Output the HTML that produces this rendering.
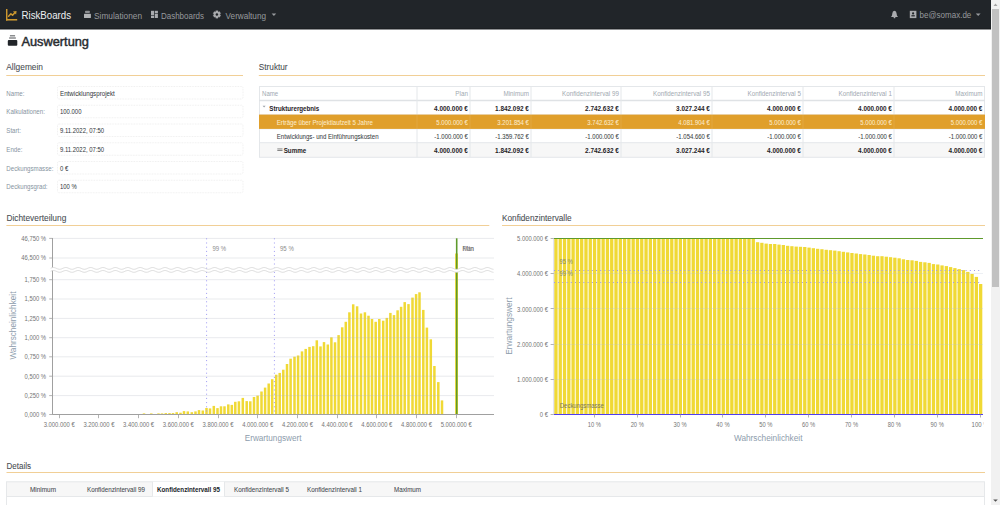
<!DOCTYPE html>
<html><head><meta charset="utf-8"><title>RiskBoards - Auswertung</title>
<style>html,body{margin:0;padding:0;background:#fff;overflow:hidden;width:1000px;height:505px}
svg{display:block;font-family:"Liberation Sans", sans-serif}</style></head>
<body><svg width="1000" height="505" viewBox="0 0 1000 505">
<defs><clipPath id="cc"><rect x="500" y="200" width="483.5" height="260"/></clipPath></defs>
<rect x="0" y="0" width="991" height="29.5" fill="#212529"/>
<rect x="0" y="28" width="991" height="1" fill="#1c1f22"/>
<rect x="6" y="9" width="1.45" height="11.6" fill="#cc982f"/>
<rect x="6" y="19.0" width="11.2" height="1.55" fill="#cc982f"/>
<path d="M8.6 16.2 L10.9 13.8 L12.6 15.2 L15.0 12.6" fill="none" stroke="#cc982f" stroke-width="1.5" stroke-linejoin="round" stroke-linecap="round"/>
<path d="M12.9 11.4 L16.6 10.9 L16.1 14.6 Z" fill="#cc982f"/>
<text x="21.5" y="18.9" font-size="10.8" fill="#eef0f2" textLength="49.5" lengthAdjust="spacingAndGlyphs">RiskBoards</text>
<rect x="85" y="10.8" width="4.9" height="2.3" fill="#8c8e91" rx="0.8"/>
<rect x="84" y="13.8" width="6.9" height="4.2" fill="#b3b5b7" rx="0.5"/>
<text x="94" y="18.5" font-size="9.3" fill="#979a9d" textLength="48" lengthAdjust="spacingAndGlyphs">Simulationen</text>
<rect x="151" y="10.8" width="3.1" height="4.6" fill="#a9abae"/>
<rect x="151" y="16" width="3.1" height="2" fill="#a9abae"/>
<rect x="154.8" y="10.8" width="3.1" height="2.2" fill="#a9abae"/>
<rect x="154.8" y="13.6" width="3.1" height="4.4" fill="#a9abae"/>
<text x="161" y="18.5" font-size="9.3" fill="#979a9d" textLength="43" lengthAdjust="spacingAndGlyphs">Dashboards</text>
<polygon points="220.70,15.28 219.56,17.25 218.71,16.80 218.07,17.16 218.04,18.13 215.76,18.13 215.73,17.16 215.09,16.80 214.24,17.25 213.10,15.28 213.92,14.77 213.92,14.03 213.10,13.52 214.24,11.55 215.09,12.00 215.73,11.64 215.76,10.67 218.04,10.67 218.07,11.64 218.71,12.00 219.56,11.55 220.70,13.52 219.88,14.03 219.88,14.77" fill="#a9abae" stroke="#a9abae" stroke-width="0.3" stroke-linejoin="round"/>
<circle cx="216.9" cy="14.4" r="1.25" fill="#212529"/>
<text x="225.6" y="18.5" font-size="9.3" fill="#979a9d" textLength="40.4" lengthAdjust="spacingAndGlyphs">Verwaltung</text>
<path d="M271.6 13.6 H276.2 L273.9 16 Z" fill="#979a9d"/>
<path d="M891 17 Q892.3 15.6 892.3 13.5 Q892.5 10.9 894.4 10.8 Q896.5 10.9 896.6 13.5 Q896.6 15.6 898 17 Z" fill="#a9abae"/>
<circle cx="894.5" cy="17.4" r="0.9" fill="#a9abae"/>
<rect x="909.8" y="10.8" width="6.6" height="7.3" fill="#a9abae"/>
<circle cx="913.1" cy="13.4" r="1.1" fill="#212529"/>
<rect x="911.4" y="15.2" width="3.4" height="1.2" fill="#212529"/>
<text x="919.6" y="18.3" font-size="9.3" fill="#979a9d" textLength="51.7" lengthAdjust="spacingAndGlyphs">be@somax.de</text>
<path d="M975.8 13.6 H980.6 L978.2 16 Z" fill="#979a9d"/>
<rect x="991" y="0" width="9" height="505" fill="#f1f1f1"/>
<rect x="992" y="9" width="7" height="278" fill="#c1c1c1"/>
<path d="M993.5 5.9 H997.5 L995.5 3.6 Z" fill="#a3a3a3"/>
<path d="M993.2 499.4 H997.8 L995.5 501.8 Z" fill="#505050"/>
<rect x="9.9" y="35" width="5.2" height="1.5" fill="#8a8c8e" rx="0.3"/>
<rect x="9.1" y="37.3" width="6.8" height="1.4" fill="#8a8c8e" rx="0.3"/>
<rect x="7.8" y="39.9" width="9.5" height="5.9" fill="#212529" rx="1"/>
<text x="21.4" y="46" font-size="12.5" fill="#282c30" textLength="67.6" lengthAdjust="spacingAndGlyphs" stroke="#282c30" stroke-width="0.45">Auswertung</text>
<text x="6.3" y="70" font-size="8.9" fill="#4a4e53" textLength="36.7" lengthAdjust="spacingAndGlyphs" stroke="#4a4e53" stroke-width="0.08">Allgemein</text>
<rect x="6.3" y="75" width="236.7" height="1" fill="#f1cf96"/>
<text x="258.8" y="70" font-size="8.9" fill="#4a4e53" textLength="28.8" lengthAdjust="spacingAndGlyphs" stroke="#4a4e53" stroke-width="0.08">Struktur</text>
<rect x="258.8" y="75" width="726.2" height="1" fill="#f1cf96"/>
<text x="6.4" y="221.4" font-size="8.9" fill="#4a4e53" textLength="59.9" lengthAdjust="spacingAndGlyphs" stroke="#4a4e53" stroke-width="0.08">Dichteverteilung</text>
<rect x="6.4" y="225" width="482.90000000000003" height="1" fill="#f1cf96"/>
<text x="502" y="221.4" font-size="8.9" fill="#4a4e53" textLength="69.6" lengthAdjust="spacingAndGlyphs" stroke="#4a4e53" stroke-width="0.08">Konfidenzintervalle</text>
<rect x="502" y="225" width="483" height="1" fill="#f1cf96"/>
<text x="6.5" y="468.5" font-size="8.9" fill="#4a4e53" textLength="24.5" lengthAdjust="spacingAndGlyphs" stroke="#4a4e53" stroke-width="0.08">Details</text>
<rect x="6.5" y="472" width="978.5" height="1" fill="#f1cf96"/>
<rect x="57.5" y="86.50" width="185.5" height="12.5" rx="1.5" fill="none" stroke="#e2e2e2" stroke-width="0.6" stroke-dasharray="0.8,0.8"/>
<text x="6.3" y="95.5" font-size="6.6" fill="#8694a1" textLength="18.08" lengthAdjust="spacingAndGlyphs">Name:</text>
<text x="60" y="95.5" font-size="6.6" fill="#2f353a" textLength="54.82" lengthAdjust="spacingAndGlyphs">Entwicklungsprojekt</text>
<rect x="57.5" y="105.25" width="185.5" height="12.5" rx="1.5" fill="none" stroke="#e2e2e2" stroke-width="0.6" stroke-dasharray="0.8,0.8"/>
<text x="6.3" y="114.25" font-size="6.6" fill="#8694a1" textLength="38.56" lengthAdjust="spacingAndGlyphs">Kalkulationen:</text>
<text x="60" y="114.25" font-size="6.6" fill="#2f353a" textLength="21.47" lengthAdjust="spacingAndGlyphs">100.000</text>
<rect x="57.5" y="124.00" width="185.5" height="12.5" rx="1.5" fill="none" stroke="#e2e2e2" stroke-width="0.6" stroke-dasharray="0.8,0.8"/>
<text x="6.3" y="133.0" font-size="6.6" fill="#8694a1" textLength="14.67" lengthAdjust="spacingAndGlyphs">Start:</text>
<text x="60" y="133.0" font-size="6.6" fill="#2f353a" textLength="44.15" lengthAdjust="spacingAndGlyphs">9.11.2022, 07:50</text>
<rect x="57.5" y="142.75" width="185.5" height="12.5" rx="1.5" fill="none" stroke="#e2e2e2" stroke-width="0.6" stroke-dasharray="0.8,0.8"/>
<text x="6.3" y="151.75" font-size="6.6" fill="#8694a1" textLength="16.04" lengthAdjust="spacingAndGlyphs">Ende:</text>
<text x="60" y="151.75" font-size="6.6" fill="#2f353a" textLength="44.15" lengthAdjust="spacingAndGlyphs">9.11.2022, 07:50</text>
<rect x="57.5" y="161.50" width="185.5" height="12.5" rx="1.5" fill="none" stroke="#e2e2e2" stroke-width="0.6" stroke-dasharray="0.8,0.8"/>
<text x="6.3" y="170.5" font-size="6.6" fill="#8694a1" textLength="47.08" lengthAdjust="spacingAndGlyphs">Deckungsmasse:</text>
<text x="60" y="170.5" font-size="6.6" fill="#2f353a" textLength="8.26" lengthAdjust="spacingAndGlyphs">0 €</text>
<rect x="57.5" y="180.25" width="185.5" height="12.5" rx="1.5" fill="none" stroke="#e2e2e2" stroke-width="0.6" stroke-dasharray="0.8,0.8"/>
<text x="6.3" y="189.25" font-size="6.6" fill="#8694a1" textLength="41.28" lengthAdjust="spacingAndGlyphs">Deckungsgrad:</text>
<text x="60" y="189.25" font-size="6.6" fill="#2f353a" textLength="16.84" lengthAdjust="spacingAndGlyphs">100 %</text>
<rect x="259" y="142.7" width="725.5" height="14.6" fill="#f7f7f7"/>
<rect x="259.5" y="86.5" width="725" height="70.8" fill="none" stroke="#e4e7ea" stroke-width="1"/>
<line x1="259" y1="100.5" x2="985" y2="100.5" stroke="#e4e7ea" stroke-width="1"/>
<line x1="259" y1="114.9" x2="985" y2="114.9" stroke="#e4e7ea" stroke-width="1"/>
<line x1="259" y1="128.8" x2="985" y2="128.8" stroke="#e4e7ea" stroke-width="1"/>
<line x1="259" y1="142.7" x2="985" y2="142.7" stroke="#e4e7ea" stroke-width="1"/>
<line x1="259" y1="100.5" x2="985" y2="100.5" stroke="#dfe2e5" stroke-width="1.6"/>
<line x1="417" y1="86.5" x2="417" y2="157.3" stroke="#e4e7ea" stroke-width="1"/>
<line x1="470" y1="86.5" x2="470" y2="157.3" stroke="#e4e7ea" stroke-width="1"/>
<line x1="531" y1="86.5" x2="531" y2="157.3" stroke="#e4e7ea" stroke-width="1"/>
<line x1="621" y1="86.5" x2="621" y2="157.3" stroke="#e4e7ea" stroke-width="1"/>
<line x1="712" y1="86.5" x2="712" y2="157.3" stroke="#e4e7ea" stroke-width="1"/>
<line x1="803" y1="86.5" x2="803" y2="157.3" stroke="#e4e7ea" stroke-width="1"/>
<line x1="894" y1="86.5" x2="894" y2="157.3" stroke="#e4e7ea" stroke-width="1"/>
<rect x="259" y="114.6" width="726" height="14.3" fill="#e09f2b"/>
<line x1="417" y1="114.6" x2="417" y2="128.9" stroke="rgba(255,255,255,0.10)" stroke-width="1"/>
<line x1="470" y1="114.6" x2="470" y2="128.9" stroke="rgba(255,255,255,0.10)" stroke-width="1"/>
<line x1="531" y1="114.6" x2="531" y2="128.9" stroke="rgba(255,255,255,0.10)" stroke-width="1"/>
<line x1="621" y1="114.6" x2="621" y2="128.9" stroke="rgba(255,255,255,0.10)" stroke-width="1"/>
<line x1="712" y1="114.6" x2="712" y2="128.9" stroke="rgba(255,255,255,0.10)" stroke-width="1"/>
<line x1="803" y1="114.6" x2="803" y2="128.9" stroke="rgba(255,255,255,0.10)" stroke-width="1"/>
<line x1="894" y1="114.6" x2="894" y2="128.9" stroke="rgba(255,255,255,0.10)" stroke-width="1"/>
<text x="262" y="96.1" font-size="6.6" fill="#a1a9b1" textLength="16.2" lengthAdjust="spacingAndGlyphs">Name</text>
<text x="467.9" y="96.1" font-size="6.6" fill="#a1a9b1" text-anchor="end" textLength="12.55" lengthAdjust="spacingAndGlyphs">Plan</text>
<text x="528.9" y="96.1" font-size="6.6" fill="#a1a9b1" text-anchor="end" textLength="25.43" lengthAdjust="spacingAndGlyphs">Minimum</text>
<text x="618.9" y="96.1" font-size="6.6" fill="#a1a9b1" text-anchor="end" textLength="56.81" lengthAdjust="spacingAndGlyphs">Konfidenzinterval 99</text>
<text x="709.9" y="96.1" font-size="6.6" fill="#a1a9b1" text-anchor="end" textLength="56.81" lengthAdjust="spacingAndGlyphs">Konfidenzinterval 95</text>
<text x="800.9" y="96.1" font-size="6.6" fill="#a1a9b1" text-anchor="end" textLength="53.33" lengthAdjust="spacingAndGlyphs">Konfidenzinterval 5</text>
<text x="891.9" y="96.1" font-size="6.6" fill="#a1a9b1" text-anchor="end" textLength="53.33" lengthAdjust="spacingAndGlyphs">Konfidenzinterval 1</text>
<text x="982.4" y="96.1" font-size="6.6" fill="#a1a9b1" text-anchor="end" textLength="27.17" lengthAdjust="spacingAndGlyphs">Maximum</text>
<path d="M262.6 105.8 H265.6 L264.1 107.4 Z" fill="#9aa0a6"/>
<text x="269.3" y="110.5" font-size="6.5" fill="#1f2326" font-weight="bold" textLength="50" lengthAdjust="spacingAndGlyphs">Strukturergebnis</text>
<text x="467.9" y="110.5" font-size="6.5" fill="#1f2326" font-weight="bold" text-anchor="end" textLength="33.82" lengthAdjust="spacingAndGlyphs">4.000.000 €</text>
<text x="528.9" y="110.5" font-size="6.5" fill="#1f2326" font-weight="bold" text-anchor="end" textLength="33.82" lengthAdjust="spacingAndGlyphs">1.842.092 €</text>
<text x="618.9" y="110.5" font-size="6.5" fill="#1f2326" font-weight="bold" text-anchor="end" textLength="33.82" lengthAdjust="spacingAndGlyphs">2.742.632 €</text>
<text x="709.9" y="110.5" font-size="6.5" fill="#1f2326" font-weight="bold" text-anchor="end" textLength="33.82" lengthAdjust="spacingAndGlyphs">3.027.244 €</text>
<text x="800.9" y="110.5" font-size="6.5" fill="#1f2326" font-weight="bold" text-anchor="end" textLength="33.82" lengthAdjust="spacingAndGlyphs">4.000.000 €</text>
<text x="891.9" y="110.5" font-size="6.5" fill="#1f2326" font-weight="bold" text-anchor="end" textLength="33.82" lengthAdjust="spacingAndGlyphs">4.000.000 €</text>
<text x="982.4" y="110.5" font-size="6.5" fill="#1f2326" font-weight="bold" text-anchor="end" textLength="33.82" lengthAdjust="spacingAndGlyphs">4.000.000 €</text>
<text x="276.8" y="124.5" font-size="6.6" fill="#fcebcc" textLength="96.03" lengthAdjust="spacingAndGlyphs" stroke="#fcebcc" stroke-width="0.05">Erträge über Projektlaufzeit 5 Jahre</text>
<text x="467.9" y="124.5" font-size="6.6" fill="#fcebcc" text-anchor="end" textLength="31.55" lengthAdjust="spacingAndGlyphs" stroke="#fcebcc" stroke-width="0.05">5.000.000 €</text>
<text x="528.9" y="124.5" font-size="6.6" fill="#fcebcc" text-anchor="end" textLength="31.55" lengthAdjust="spacingAndGlyphs" stroke="#fcebcc" stroke-width="0.05">3.201.854 €</text>
<text x="618.9" y="124.5" font-size="6.6" fill="#fcebcc" text-anchor="end" textLength="31.55" lengthAdjust="spacingAndGlyphs" stroke="#fcebcc" stroke-width="0.05">3.742.632 €</text>
<text x="709.9" y="124.5" font-size="6.6" fill="#fcebcc" text-anchor="end" textLength="31.55" lengthAdjust="spacingAndGlyphs" stroke="#fcebcc" stroke-width="0.05">4.081.904 €</text>
<text x="800.9" y="124.5" font-size="6.6" fill="#fcebcc" text-anchor="end" textLength="31.55" lengthAdjust="spacingAndGlyphs" stroke="#fcebcc" stroke-width="0.05">5.000.000 €</text>
<text x="891.9" y="124.5" font-size="6.6" fill="#fcebcc" text-anchor="end" textLength="31.55" lengthAdjust="spacingAndGlyphs" stroke="#fcebcc" stroke-width="0.05">5.000.000 €</text>
<text x="982.4" y="124.5" font-size="6.6" fill="#fcebcc" text-anchor="end" textLength="31.55" lengthAdjust="spacingAndGlyphs" stroke="#fcebcc" stroke-width="0.05">5.000.000 €</text>
<text x="276.8" y="138.5" font-size="6.6" fill="#3a3f44" textLength="101.8" lengthAdjust="spacingAndGlyphs" stroke="#3a3f44" stroke-width="0.05">Entwicklungs- und Einführungskosten</text>
<text x="467.9" y="138.5" font-size="6.6" fill="#3a3f44" text-anchor="end" textLength="33.54" lengthAdjust="spacingAndGlyphs" stroke="#3a3f44" stroke-width="0.05">-1.000.000 €</text>
<text x="528.9" y="138.5" font-size="6.6" fill="#3a3f44" text-anchor="end" textLength="33.54" lengthAdjust="spacingAndGlyphs" stroke="#3a3f44" stroke-width="0.05">-1.359.762 €</text>
<text x="618.9" y="138.5" font-size="6.6" fill="#3a3f44" text-anchor="end" textLength="33.54" lengthAdjust="spacingAndGlyphs" stroke="#3a3f44" stroke-width="0.05">-1.000.000 €</text>
<text x="709.9" y="138.5" font-size="6.6" fill="#3a3f44" text-anchor="end" textLength="33.54" lengthAdjust="spacingAndGlyphs" stroke="#3a3f44" stroke-width="0.05">-1.054.660 €</text>
<text x="800.9" y="138.5" font-size="6.6" fill="#3a3f44" text-anchor="end" textLength="33.54" lengthAdjust="spacingAndGlyphs" stroke="#3a3f44" stroke-width="0.05">-1.000.000 €</text>
<text x="891.9" y="138.5" font-size="6.6" fill="#3a3f44" text-anchor="end" textLength="33.54" lengthAdjust="spacingAndGlyphs" stroke="#3a3f44" stroke-width="0.05">-1.000.000 €</text>
<text x="982.4" y="138.5" font-size="6.6" fill="#3a3f44" text-anchor="end" textLength="33.54" lengthAdjust="spacingAndGlyphs" stroke="#3a3f44" stroke-width="0.05">-1.000.000 €</text>
<rect x="277.3" y="148.6" width="5.2" height="0.7" fill="#555"/>
<rect x="277.3" y="150.3" width="5.2" height="0.7" fill="#555"/>
<text x="283.7" y="152.6" font-size="6.5" fill="#1f2326" font-weight="bold" textLength="22.54" lengthAdjust="spacingAndGlyphs">Summe</text>
<text x="467.9" y="152.6" font-size="6.5" fill="#1f2326" font-weight="bold" text-anchor="end" textLength="33.82" lengthAdjust="spacingAndGlyphs">4.000.000 €</text>
<text x="528.9" y="152.6" font-size="6.5" fill="#1f2326" font-weight="bold" text-anchor="end" textLength="33.82" lengthAdjust="spacingAndGlyphs">1.842.092 €</text>
<text x="618.9" y="152.6" font-size="6.5" fill="#1f2326" font-weight="bold" text-anchor="end" textLength="33.82" lengthAdjust="spacingAndGlyphs">2.742.632 €</text>
<text x="709.9" y="152.6" font-size="6.5" fill="#1f2326" font-weight="bold" text-anchor="end" textLength="33.82" lengthAdjust="spacingAndGlyphs">3.027.244 €</text>
<text x="800.9" y="152.6" font-size="6.5" fill="#1f2326" font-weight="bold" text-anchor="end" textLength="33.82" lengthAdjust="spacingAndGlyphs">4.000.000 €</text>
<text x="891.9" y="152.6" font-size="6.5" fill="#1f2326" font-weight="bold" text-anchor="end" textLength="33.82" lengthAdjust="spacingAndGlyphs">4.000.000 €</text>
<text x="982.4" y="152.6" font-size="6.5" fill="#1f2326" font-weight="bold" text-anchor="end" textLength="33.82" lengthAdjust="spacingAndGlyphs">4.000.000 €</text>
<text x="46" y="416.9" font-size="6.8" fill="#757575" text-anchor="end" textLength="21.46" lengthAdjust="spacingAndGlyphs">0,000 %</text>
<line x1="49.2" y1="414.5" x2="52.5" y2="414.5" stroke="#a0a0a0" stroke-width="0.8"/>
<text x="46" y="398.0" font-size="6.8" fill="#757575" text-anchor="end" textLength="21.46" lengthAdjust="spacingAndGlyphs">0,250 %</text>
<line x1="49.2" y1="395.6" x2="52.5" y2="395.6" stroke="#a0a0a0" stroke-width="0.8"/>
<text x="46" y="378.6" font-size="6.8" fill="#757575" text-anchor="end" textLength="21.46" lengthAdjust="spacingAndGlyphs">0,500 %</text>
<line x1="49.2" y1="376.2" x2="52.5" y2="376.2" stroke="#a0a0a0" stroke-width="0.8"/>
<text x="46" y="359.2" font-size="6.8" fill="#757575" text-anchor="end" textLength="21.46" lengthAdjust="spacingAndGlyphs">0,750 %</text>
<line x1="49.2" y1="356.8" x2="52.5" y2="356.8" stroke="#a0a0a0" stroke-width="0.8"/>
<text x="46" y="340.1" font-size="6.8" fill="#757575" text-anchor="end" textLength="21.46" lengthAdjust="spacingAndGlyphs">1,000 %</text>
<line x1="49.2" y1="337.7" x2="52.5" y2="337.7" stroke="#a0a0a0" stroke-width="0.8"/>
<text x="46" y="320.8" font-size="6.8" fill="#757575" text-anchor="end" textLength="21.46" lengthAdjust="spacingAndGlyphs">1,250 %</text>
<line x1="49.2" y1="318.4" x2="52.5" y2="318.4" stroke="#a0a0a0" stroke-width="0.8"/>
<text x="46" y="301.4" font-size="6.8" fill="#757575" text-anchor="end" textLength="21.46" lengthAdjust="spacingAndGlyphs">1,500 %</text>
<line x1="49.2" y1="299.0" x2="52.5" y2="299.0" stroke="#a0a0a0" stroke-width="0.8"/>
<text x="46" y="282.1" font-size="6.8" fill="#757575" text-anchor="end" textLength="21.46" lengthAdjust="spacingAndGlyphs">1,750 %</text>
<line x1="49.2" y1="279.7" x2="52.5" y2="279.7" stroke="#a0a0a0" stroke-width="0.8"/>
<text x="46" y="240.8" font-size="6.8" fill="#757575" text-anchor="end" textLength="24.71" lengthAdjust="spacingAndGlyphs">46,750 %</text>
<line x1="49.2" y1="238.4" x2="52.5" y2="238.4" stroke="#a0a0a0" stroke-width="0.8"/>
<text x="46" y="260.4" font-size="6.8" fill="#757575" text-anchor="end" textLength="24.71" lengthAdjust="spacingAndGlyphs">46,500 %</text>
<line x1="49.2" y1="258" x2="52.5" y2="258" stroke="#a0a0a0" stroke-width="0.8"/>
<rect x="142.75" y="413.4" width="2.5" height="0.9" fill="#f0d935"/>
<rect x="150.05" y="413.4" width="2.5" height="0.9" fill="#f0d935"/>
<rect x="157.25" y="413.4" width="2.5" height="0.9" fill="#f0d935"/>
<rect x="160.75" y="413.4" width="2.5" height="0.9" fill="#f0d935"/>
<rect x="164.55" y="413.1" width="2.5" height="1.2" fill="#f0d935"/>
<rect x="168.25" y="413.1" width="2.5" height="1.2" fill="#f0d935"/>
<rect x="171.75" y="413.1" width="2.5" height="1.2" fill="#f0d935"/>
<rect x="175.45" y="412.2" width="2.5" height="2.1" fill="#f0d935"/>
<rect x="179.25" y="412.7" width="2.5" height="1.6" fill="#f0d935"/>
<rect x="182.75" y="411.1" width="2.5" height="3.2" fill="#f0d935"/>
<rect x="186.55" y="411.4" width="2.5" height="2.9" fill="#f0d935"/>
<rect x="190.55" y="412.2" width="2.5" height="2.1" fill="#f0d935"/>
<rect x="194.25" y="411.4" width="2.5" height="2.9" fill="#f0d935"/>
<rect x="197.75" y="410.1" width="2.5" height="4.2" fill="#f0d935"/>
<rect x="201.55" y="410.5" width="2.5" height="3.8" fill="#f0d935"/>
<rect x="205.25" y="408.0" width="2.5" height="6.3" fill="#f0d935"/>
<rect x="208.75" y="408.4" width="2.5" height="5.9" fill="#f0d935"/>
<rect x="212.55" y="405.9" width="2.5" height="8.4" fill="#f0d935"/>
<rect x="216.25" y="408.1" width="2.5" height="6.2" fill="#f0d935"/>
<rect x="219.75" y="406.3" width="2.5" height="8" fill="#f0d935"/>
<rect x="223.25" y="406.3" width="2.5" height="8.0" fill="#f0d935"/>
<rect x="227.05" y="404.4" width="2.5" height="9.9" fill="#f0d935"/>
<rect x="230.55" y="404.9" width="2.5" height="9.4" fill="#f0d935"/>
<rect x="234.05" y="401.8" width="2.5" height="12.5" fill="#f0d935"/>
<rect x="237.65" y="401.3" width="2.5" height="13" fill="#f0d935"/>
<rect x="241.55" y="397.9" width="2.5" height="16.4" fill="#f0d935"/>
<rect x="245.45" y="401.1" width="2.5" height="13.2" fill="#f0d935"/>
<rect x="249.05" y="401.3" width="2.5" height="13" fill="#f0d935"/>
<rect x="252.75" y="397.0" width="2.5" height="17.3" fill="#f0d935"/>
<rect x="256.35" y="395.6" width="2.5" height="18.7" fill="#f0d935"/>
<rect x="260.25" y="391.5" width="2.5" height="22.8" fill="#f0d935"/>
<rect x="263.85" y="387.6" width="2.5" height="26.7" fill="#f0d935"/>
<rect x="267.45" y="383.5" width="2.5" height="30.8" fill="#f0d935"/>
<rect x="270.95" y="379.2" width="2.5" height="35.1" fill="#f0d935"/>
<rect x="274.95" y="374.7" width="2.5" height="39.6" fill="#f0d935"/>
<rect x="278.45" y="372.9" width="2.5" height="41.4" fill="#f0d935"/>
<rect x="282.05" y="369.7" width="2.5" height="44.6" fill="#f0d935"/>
<rect x="285.75" y="364.0" width="2.5" height="50.3" fill="#f0d935"/>
<rect x="289.35" y="358.7" width="2.5" height="55.6" fill="#f0d935"/>
<rect x="293.25" y="356.7" width="2.5" height="57.6" fill="#f0d935"/>
<rect x="296.85" y="355.5" width="2.5" height="58.8" fill="#f0d935"/>
<rect x="300.75" y="351.4" width="2.5" height="62.9" fill="#f0d935"/>
<rect x="304.45" y="348.9" width="2.5" height="65.4" fill="#f0d935"/>
<rect x="308.25" y="346.9" width="2.5" height="67.4" fill="#f0d935"/>
<rect x="311.95" y="346.2" width="2.5" height="68.1" fill="#f0d935"/>
<rect x="315.55" y="340.3" width="2.5" height="74" fill="#f0d935"/>
<rect x="319.25" y="346.4" width="2.5" height="67.9" fill="#f0d935"/>
<rect x="322.75" y="342.1" width="2.5" height="72.2" fill="#f0d935"/>
<rect x="326.55" y="344.5" width="2.5" height="69.8" fill="#f0d935"/>
<rect x="330.15" y="337.3" width="2.5" height="77" fill="#f0d935"/>
<rect x="333.75" y="342.3" width="2.5" height="72" fill="#f0d935"/>
<rect x="337.35" y="335.1" width="2.5" height="79.2" fill="#f0d935"/>
<rect x="340.95" y="327.3" width="2.5" height="87" fill="#f0d935"/>
<rect x="344.55" y="321.8" width="2.5" height="92.5" fill="#f0d935"/>
<rect x="348.15" y="312.3" width="2.5" height="102" fill="#f0d935"/>
<rect x="351.95" y="304.3" width="2.5" height="110" fill="#f0d935"/>
<rect x="355.85" y="306.3" width="2.5" height="108" fill="#f0d935"/>
<rect x="359.75" y="313.5" width="2.5" height="100.8" fill="#f0d935"/>
<rect x="363.65" y="312.3" width="2.5" height="102" fill="#f0d935"/>
<rect x="367.25" y="315.7" width="2.5" height="98.6" fill="#f0d935"/>
<rect x="370.75" y="319.0" width="2.5" height="95.3" fill="#f0d935"/>
<rect x="374.45" y="321.8" width="2.5" height="92.5" fill="#f0d935"/>
<rect x="378.05" y="319.0" width="2.5" height="95.3" fill="#f0d935"/>
<rect x="381.95" y="320.7" width="2.5" height="93.6" fill="#f0d935"/>
<rect x="385.55" y="317.9" width="2.5" height="96.4" fill="#f0d935"/>
<rect x="389.15" y="312.9" width="2.5" height="101.4" fill="#f0d935"/>
<rect x="392.75" y="315.1" width="2.5" height="99.2" fill="#f0d935"/>
<rect x="396.35" y="310.3" width="2.5" height="104" fill="#f0d935"/>
<rect x="399.85" y="306.8" width="2.5" height="107.5" fill="#f0d935"/>
<rect x="403.45" y="302.1" width="2.5" height="112.2" fill="#f0d935"/>
<rect x="407.25" y="304.1" width="2.5" height="110.2" fill="#f0d935"/>
<rect x="411.25" y="297.6" width="2.5" height="116.7" fill="#f0d935"/>
<rect x="414.85" y="294.1" width="2.5" height="120.2" fill="#f0d935"/>
<rect x="418.25" y="292.3" width="2.5" height="122" fill="#f0d935"/>
<rect x="422.05" y="309.9" width="2.5" height="104.4" fill="#f0d935"/>
<rect x="425.65" y="327.6" width="2.5" height="86.7" fill="#f0d935"/>
<rect x="429.55" y="339.3" width="2.5" height="75" fill="#f0d935"/>
<rect x="433.15" y="366.0" width="2.5" height="48.3" fill="#f0d935"/>
<rect x="437.05" y="382.1" width="2.5" height="32.2" fill="#f0d935"/>
<rect x="440.75" y="400.4" width="2.5" height="13.9" fill="#f0d935"/>
<rect x="455.1" y="253.5" width="2.9" height="160.8" fill="#f0d935"/>
<line x1="52.5" y1="395.6" x2="494" y2="395.6" stroke="rgba(175,180,192,0.28)" stroke-width="1"/>
<line x1="52.5" y1="376.2" x2="494" y2="376.2" stroke="rgba(175,180,192,0.28)" stroke-width="1"/>
<line x1="52.5" y1="356.8" x2="494" y2="356.8" stroke="rgba(175,180,192,0.28)" stroke-width="1"/>
<line x1="52.5" y1="337.7" x2="494" y2="337.7" stroke="rgba(175,180,192,0.28)" stroke-width="1"/>
<line x1="52.5" y1="318.4" x2="494" y2="318.4" stroke="rgba(175,180,192,0.28)" stroke-width="1"/>
<line x1="52.5" y1="299.0" x2="494" y2="299.0" stroke="rgba(175,180,192,0.28)" stroke-width="1"/>
<line x1="52.5" y1="279.7" x2="494" y2="279.7" stroke="rgba(175,180,192,0.28)" stroke-width="1"/>
<line x1="52.5" y1="258" x2="494" y2="258" stroke="rgba(175,180,192,0.28)" stroke-width="1"/>
<line x1="52.5" y1="238.4" x2="494" y2="238.4" stroke="rgba(175,180,192,0.28)" stroke-width="1"/>
<line x1="206.6" y1="238.3" x2="206.6" y2="414.3" stroke="#9c98f2" stroke-width="1" stroke-dasharray="1,3.2"/>
<line x1="274.4" y1="238.3" x2="274.4" y2="414.3" stroke="#9c98f2" stroke-width="1" stroke-dasharray="1,3.2"/>
<text x="212.4" y="250.8" font-size="6.8" fill="#8e8e8e" textLength="13.7" lengthAdjust="spacingAndGlyphs">99 %</text>
<text x="280" y="250.8" font-size="6.8" fill="#8e8e8e" textLength="13.8" lengthAdjust="spacingAndGlyphs">95 %</text>
<line x1="456.7" y1="238.3" x2="456.7" y2="414.3" stroke="#5e9a2c" stroke-width="1.6"/>
<text x="462.6" y="250.8" font-size="6.6" fill="#777777" textLength="11.2" lengthAdjust="spacingAndGlyphs">Plan</text>
<text x="462.6" y="250.8" font-size="6.6" fill="#777777" textLength="11.2" lengthAdjust="spacingAndGlyphs">Min</text>
<line x1="52.5" y1="238" x2="52.5" y2="414.8" stroke="#a0a0a0" stroke-width="1"/>
<line x1="52.5" y1="414.5" x2="494" y2="414.5" stroke="#a0a0a0" stroke-width="1"/>
<line x1="59.5" y1="414.5" x2="59.5" y2="418.2" stroke="#a0a0a0" stroke-width="0.8"/>
<text x="59.2" y="426.7" font-size="6.8" fill="#757575" text-anchor="middle" textLength="31" lengthAdjust="spacingAndGlyphs">3.000.000 €</text>
<line x1="98.5" y1="414.5" x2="98.5" y2="418.2" stroke="#a0a0a0" stroke-width="0.8"/>
<text x="98.9" y="426.7" font-size="6.8" fill="#757575" text-anchor="middle" textLength="31" lengthAdjust="spacingAndGlyphs">3.200.000 €</text>
<line x1="138.5" y1="414.5" x2="138.5" y2="418.2" stroke="#a0a0a0" stroke-width="0.8"/>
<text x="138.6" y="426.7" font-size="6.8" fill="#757575" text-anchor="middle" textLength="31" lengthAdjust="spacingAndGlyphs">3.400.000 €</text>
<line x1="178.5" y1="414.5" x2="178.5" y2="418.2" stroke="#a0a0a0" stroke-width="0.8"/>
<text x="178.3" y="426.7" font-size="6.8" fill="#757575" text-anchor="middle" textLength="31" lengthAdjust="spacingAndGlyphs">3.600.000 €</text>
<line x1="218.5" y1="414.5" x2="218.5" y2="418.2" stroke="#a0a0a0" stroke-width="0.8"/>
<text x="218.0" y="426.7" font-size="6.8" fill="#757575" text-anchor="middle" textLength="31" lengthAdjust="spacingAndGlyphs">3.800.000 €</text>
<line x1="257.5" y1="414.5" x2="257.5" y2="418.2" stroke="#a0a0a0" stroke-width="0.8"/>
<text x="257.7" y="426.7" font-size="6.8" fill="#757575" text-anchor="middle" textLength="31" lengthAdjust="spacingAndGlyphs">4.000.000 €</text>
<line x1="297.5" y1="414.5" x2="297.5" y2="418.2" stroke="#a0a0a0" stroke-width="0.8"/>
<text x="297.4" y="426.7" font-size="6.8" fill="#757575" text-anchor="middle" textLength="31" lengthAdjust="spacingAndGlyphs">4.200.000 €</text>
<line x1="337.5" y1="414.5" x2="337.5" y2="418.2" stroke="#a0a0a0" stroke-width="0.8"/>
<text x="337.1" y="426.7" font-size="6.8" fill="#757575" text-anchor="middle" textLength="31" lengthAdjust="spacingAndGlyphs">4.400.000 €</text>
<line x1="376.5" y1="414.5" x2="376.5" y2="418.2" stroke="#a0a0a0" stroke-width="0.8"/>
<text x="376.8" y="426.7" font-size="6.8" fill="#757575" text-anchor="middle" textLength="31" lengthAdjust="spacingAndGlyphs">4.600.000 €</text>
<line x1="416.5" y1="414.5" x2="416.5" y2="418.2" stroke="#a0a0a0" stroke-width="0.8"/>
<text x="416.5" y="426.7" font-size="6.8" fill="#757575" text-anchor="middle" textLength="31" lengthAdjust="spacingAndGlyphs">4.800.000 €</text>
<line x1="456.5" y1="414.5" x2="456.5" y2="418.2" stroke="#a0a0a0" stroke-width="0.8"/>
<text x="456.2" y="426.7" font-size="6.8" fill="#757575" text-anchor="middle" textLength="31" lengthAdjust="spacingAndGlyphs">5.000.000 €</text>
<text x="273.1" y="441" font-size="9.2" fill="#8d9cac" text-anchor="middle" textLength="56.7" lengthAdjust="spacingAndGlyphs">Erwartungswert</text>
<text x="15.9" y="325.6" font-size="9.2" fill="#8d9cac" text-anchor="middle" textLength="68" lengthAdjust="spacingAndGlyphs" transform="rotate(-90 15.9 325.6)">Wahrscheinlichkeit</text>
<polygon points="50.70,268.22 51.30,267.96 51.90,267.75 52.50,267.59 53.10,267.51 53.70,267.51 54.30,267.59 54.90,267.75 55.50,267.96 56.10,268.22 56.70,268.49 57.30,268.75 57.90,268.99 58.50,269.16 59.10,269.27 59.70,269.30 60.30,269.24 60.90,269.11 61.50,268.91 62.10,268.67 62.70,268.40 63.30,268.13 63.90,267.89 64.50,267.69 65.10,267.56 65.70,267.50 66.30,267.53 66.90,267.64 67.50,267.81 68.10,268.05 68.70,268.31 69.30,268.58 69.90,268.84 70.50,269.05 71.10,269.21 71.70,269.29 72.30,269.29 72.90,269.21 73.50,269.05 74.10,268.84 74.70,268.58 75.30,268.31 75.90,268.05 76.50,267.81 77.10,267.64 77.70,267.53 78.30,267.50 78.90,267.56 79.50,267.69 80.10,267.89 80.70,268.13 81.30,268.40 81.90,268.67 82.50,268.91 83.10,269.11 83.70,269.24 84.30,269.30 84.90,269.27 85.50,269.16 86.10,268.99 86.70,268.75 87.30,268.49 87.90,268.22 88.50,267.96 89.10,267.75 89.70,267.59 90.30,267.51 90.90,267.51 91.50,267.59 92.10,267.75 92.70,267.96 93.30,268.22 93.90,268.49 94.50,268.75 95.10,268.99 95.70,269.16 96.30,269.27 96.90,269.30 97.50,269.24 98.10,269.11 98.70,268.91 99.30,268.67 99.90,268.40 100.50,268.13 101.10,267.89 101.70,267.69 102.30,267.56 102.90,267.50 103.50,267.53 104.10,267.64 104.70,267.81 105.30,268.05 105.90,268.31 106.50,268.58 107.10,268.84 107.70,269.05 108.30,269.21 108.90,269.29 109.50,269.29 110.10,269.21 110.70,269.05 111.30,268.84 111.90,268.58 112.50,268.31 113.10,268.05 113.70,267.81 114.30,267.64 114.90,267.53 115.50,267.50 116.10,267.56 116.70,267.69 117.30,267.89 117.90,268.13 118.50,268.40 119.10,268.67 119.70,268.91 120.30,269.11 120.90,269.24 121.50,269.30 122.10,269.27 122.70,269.16 123.30,268.99 123.90,268.75 124.50,268.49 125.10,268.22 125.70,267.96 126.30,267.75 126.90,267.59 127.50,267.51 128.10,267.51 128.70,267.59 129.30,267.75 129.90,267.96 130.50,268.22 131.10,268.49 131.70,268.75 132.30,268.99 132.90,269.16 133.50,269.27 134.10,269.30 134.70,269.24 135.30,269.11 135.90,268.91 136.50,268.67 137.10,268.40 137.70,268.13 138.30,267.89 138.90,267.69 139.50,267.56 140.10,267.50 140.70,267.53 141.30,267.64 141.90,267.81 142.50,268.05 143.10,268.31 143.70,268.58 144.30,268.84 144.90,269.05 145.50,269.21 146.10,269.29 146.70,269.29 147.30,269.21 147.90,269.05 148.50,268.84 149.10,268.58 149.70,268.31 150.30,268.05 150.90,267.81 151.50,267.64 152.10,267.53 152.70,267.50 153.30,267.56 153.90,267.69 154.50,267.89 155.10,268.13 155.70,268.40 156.30,268.67 156.90,268.91 157.50,269.11 158.10,269.24 158.70,269.30 159.30,269.27 159.90,269.16 160.50,268.99 161.10,268.75 161.70,268.49 162.30,268.22 162.90,267.96 163.50,267.75 164.10,267.59 164.70,267.51 165.30,267.51 165.90,267.59 166.50,267.75 167.10,267.96 167.70,268.22 168.30,268.49 168.90,268.75 169.50,268.99 170.10,269.16 170.70,269.27 171.30,269.30 171.90,269.24 172.50,269.11 173.10,268.91 173.70,268.67 174.30,268.40 174.90,268.13 175.50,267.89 176.10,267.69 176.70,267.56 177.30,267.50 177.90,267.53 178.50,267.64 179.10,267.81 179.70,268.05 180.30,268.31 180.90,268.58 181.50,268.84 182.10,269.05 182.70,269.21 183.30,269.29 183.90,269.29 184.50,269.21 185.10,269.05 185.70,268.84 186.30,268.58 186.90,268.31 187.50,268.05 188.10,267.81 188.70,267.64 189.30,267.53 189.90,267.50 190.50,267.56 191.10,267.69 191.70,267.89 192.30,268.13 192.90,268.40 193.50,268.67 194.10,268.91 194.70,269.11 195.30,269.24 195.90,269.30 196.50,269.27 197.10,269.16 197.70,268.99 198.30,268.75 198.90,268.49 199.50,268.22 200.10,267.96 200.70,267.75 201.30,267.59 201.90,267.51 202.50,267.51 203.10,267.59 203.70,267.75 204.30,267.96 204.90,268.22 205.50,268.49 206.10,268.75 206.70,268.99 207.30,269.16 207.90,269.27 208.50,269.30 209.10,269.24 209.70,269.11 210.30,268.91 210.90,268.67 211.50,268.40 212.10,268.13 212.70,267.89 213.30,267.69 213.90,267.56 214.50,267.50 215.10,267.53 215.70,267.64 216.30,267.81 216.90,268.05 217.50,268.31 218.10,268.58 218.70,268.84 219.30,269.05 219.90,269.21 220.50,269.29 221.10,269.29 221.70,269.21 222.30,269.05 222.90,268.84 223.50,268.58 224.10,268.31 224.70,268.05 225.30,267.81 225.90,267.64 226.50,267.53 227.10,267.50 227.70,267.56 228.30,267.69 228.90,267.89 229.50,268.13 230.10,268.40 230.70,268.67 231.30,268.91 231.90,269.11 232.50,269.24 233.10,269.30 233.70,269.27 234.30,269.16 234.90,268.99 235.50,268.75 236.10,268.49 236.70,268.22 237.30,267.96 237.90,267.75 238.50,267.59 239.10,267.51 239.70,267.51 240.30,267.59 240.90,267.75 241.50,267.96 242.10,268.22 242.70,268.49 243.30,268.75 243.90,268.99 244.50,269.16 245.10,269.27 245.70,269.30 246.30,269.24 246.90,269.11 247.50,268.91 248.10,268.67 248.70,268.40 249.30,268.13 249.90,267.89 250.50,267.69 251.10,267.56 251.70,267.50 252.30,267.53 252.90,267.64 253.50,267.81 254.10,268.05 254.70,268.31 255.30,268.58 255.90,268.84 256.50,269.05 257.10,269.21 257.70,269.29 258.30,269.29 258.90,269.21 259.50,269.05 260.10,268.84 260.70,268.58 261.30,268.31 261.90,268.05 262.50,267.81 263.10,267.64 263.70,267.53 264.30,267.50 264.90,267.56 265.50,267.69 266.10,267.89 266.70,268.13 267.30,268.40 267.90,268.67 268.50,268.91 269.10,269.11 269.70,269.24 270.30,269.30 270.90,269.27 271.50,269.16 272.10,268.99 272.70,268.75 273.30,268.49 273.90,268.22 274.50,267.96 275.10,267.75 275.70,267.59 276.30,267.51 276.90,267.51 277.50,267.59 278.10,267.75 278.70,267.96 279.30,268.22 279.90,268.49 280.50,268.75 281.10,268.99 281.70,269.16 282.30,269.27 282.90,269.30 283.50,269.24 284.10,269.11 284.70,268.91 285.30,268.67 285.90,268.40 286.50,268.13 287.10,267.89 287.70,267.69 288.30,267.56 288.90,267.50 289.50,267.53 290.10,267.64 290.70,267.81 291.30,268.05 291.90,268.31 292.50,268.58 293.10,268.84 293.70,269.05 294.30,269.21 294.90,269.29 295.50,269.29 296.10,269.21 296.70,269.05 297.30,268.84 297.90,268.58 298.50,268.31 299.10,268.05 299.70,267.81 300.30,267.64 300.90,267.53 301.50,267.50 302.10,267.56 302.70,267.69 303.30,267.89 303.90,268.13 304.50,268.40 305.10,268.67 305.70,268.91 306.30,269.11 306.90,269.24 307.50,269.30 308.10,269.27 308.70,269.16 309.30,268.99 309.90,268.75 310.50,268.49 311.10,268.22 311.70,267.96 312.30,267.75 312.90,267.59 313.50,267.51 314.10,267.51 314.70,267.59 315.30,267.75 315.90,267.96 316.50,268.22 317.10,268.49 317.70,268.75 318.30,268.99 318.90,269.16 319.50,269.27 320.10,269.30 320.70,269.24 321.30,269.11 321.90,268.91 322.50,268.67 323.10,268.40 323.70,268.13 324.30,267.89 324.90,267.69 325.50,267.56 326.10,267.50 326.70,267.53 327.30,267.64 327.90,267.81 328.50,268.05 329.10,268.31 329.70,268.58 330.30,268.84 330.90,269.05 331.50,269.21 332.10,269.29 332.70,269.29 333.30,269.21 333.90,269.05 334.50,268.84 335.10,268.58 335.70,268.31 336.30,268.05 336.90,267.81 337.50,267.64 338.10,267.53 338.70,267.50 339.30,267.56 339.90,267.69 340.50,267.89 341.10,268.13 341.70,268.40 342.30,268.67 342.90,268.91 343.50,269.11 344.10,269.24 344.70,269.30 345.30,269.27 345.90,269.16 346.50,268.99 347.10,268.75 347.70,268.49 348.30,268.22 348.90,267.96 349.50,267.75 350.10,267.59 350.70,267.51 351.30,267.51 351.90,267.59 352.50,267.75 353.10,267.96 353.70,268.22 354.30,268.49 354.90,268.75 355.50,268.99 356.10,269.16 356.70,269.27 357.30,269.30 357.90,269.24 358.50,269.11 359.10,268.91 359.70,268.67 360.30,268.40 360.90,268.13 361.50,267.89 362.10,267.69 362.70,267.56 363.30,267.50 363.90,267.53 364.50,267.64 365.10,267.81 365.70,268.05 366.30,268.31 366.90,268.58 367.50,268.84 368.10,269.05 368.70,269.21 369.30,269.29 369.90,269.29 370.50,269.21 371.10,269.05 371.70,268.84 372.30,268.58 372.90,268.31 373.50,268.05 374.10,267.81 374.70,267.64 375.30,267.53 375.90,267.50 376.50,267.56 377.10,267.69 377.70,267.89 378.30,268.13 378.90,268.40 379.50,268.67 380.10,268.91 380.70,269.11 381.30,269.24 381.90,269.30 382.50,269.27 383.10,269.16 383.70,268.99 384.30,268.75 384.90,268.49 385.50,268.22 386.10,267.96 386.70,267.75 387.30,267.59 387.90,267.51 388.50,267.51 389.10,267.59 389.70,267.75 390.30,267.96 390.90,268.22 391.50,268.49 392.10,268.75 392.70,268.99 393.30,269.16 393.90,269.27 394.50,269.30 395.10,269.24 395.70,269.11 396.30,268.91 396.90,268.67 397.50,268.40 398.10,268.13 398.70,267.89 399.30,267.69 399.90,267.56 400.50,267.50 401.10,267.53 401.70,267.64 402.30,267.81 402.90,268.05 403.50,268.31 404.10,268.58 404.70,268.84 405.30,269.05 405.90,269.21 406.50,269.29 407.10,269.29 407.70,269.21 408.30,269.05 408.90,268.84 409.50,268.58 410.10,268.31 410.70,268.05 411.30,267.81 411.90,267.64 412.50,267.53 413.10,267.50 413.70,267.56 414.30,267.69 414.90,267.89 415.50,268.13 416.10,268.40 416.70,268.67 417.30,268.91 417.90,269.11 418.50,269.24 419.10,269.30 419.70,269.27 420.30,269.16 420.90,268.99 421.50,268.75 422.10,268.49 422.70,268.22 423.30,267.96 423.90,267.75 424.50,267.59 425.10,267.51 425.70,267.51 426.30,267.59 426.90,267.75 427.50,267.96 428.10,268.22 428.70,268.49 429.30,268.75 429.90,268.99 430.50,269.16 431.10,269.27 431.70,269.30 432.30,269.24 432.90,269.11 433.50,268.91 434.10,268.67 434.70,268.40 435.30,268.13 435.90,267.89 436.50,267.69 437.10,267.56 437.70,267.50 438.30,267.53 438.90,267.64 439.50,267.81 440.10,268.05 440.70,268.31 441.30,268.58 441.90,268.84 442.50,269.05 443.10,269.21 443.70,269.29 444.30,269.29 444.90,269.21 445.50,269.05 446.10,268.84 446.70,268.58 447.30,268.31 447.90,268.05 448.50,267.81 449.10,267.64 449.70,267.53 450.30,267.50 450.90,267.56 451.50,267.69 452.10,267.89 452.70,268.13 453.30,268.40 453.90,268.67 454.50,268.91 455.10,269.11 455.70,269.24 456.30,269.30 456.90,269.27 457.50,269.16 458.10,268.99 458.70,268.75 459.30,268.49 459.90,268.22 460.50,267.96 461.10,267.75 461.70,267.59 462.30,267.51 462.90,267.51 463.50,267.59 464.10,267.75 464.70,267.96 465.30,268.22 465.90,268.49 466.50,268.75 467.10,268.99 467.70,269.16 468.30,269.27 468.90,269.30 469.50,269.24 470.10,269.11 470.70,268.91 471.30,268.67 471.90,268.40 472.50,268.13 473.10,267.89 473.70,267.69 474.30,267.56 474.90,267.50 475.50,267.53 476.10,267.64 476.70,267.81 477.30,268.05 477.90,268.31 478.50,268.58 479.10,268.84 479.70,269.05 480.30,269.21 480.90,269.29 481.50,269.29 482.10,269.21 482.70,269.05 483.30,268.84 483.90,268.58 484.50,268.31 485.10,268.05 485.70,267.81 486.30,267.64 486.90,267.53 487.50,267.50 488.10,267.56 488.70,267.69 489.30,267.89 489.90,268.13 490.50,268.40 491.10,268.67 491.70,268.91 492.30,269.11 492.90,269.24 493.50,269.30 493.50,272.30 492.90,272.24 492.30,272.11 491.70,271.91 491.10,271.67 490.50,271.40 489.90,271.13 489.30,270.89 488.70,270.69 488.10,270.56 487.50,270.50 486.90,270.53 486.30,270.64 485.70,270.81 485.10,271.05 484.50,271.31 483.90,271.58 483.30,271.84 482.70,272.05 482.10,272.21 481.50,272.29 480.90,272.29 480.30,272.21 479.70,272.05 479.10,271.84 478.50,271.58 477.90,271.31 477.30,271.05 476.70,270.81 476.10,270.64 475.50,270.53 474.90,270.50 474.30,270.56 473.70,270.69 473.10,270.89 472.50,271.13 471.90,271.40 471.30,271.67 470.70,271.91 470.10,272.11 469.50,272.24 468.90,272.30 468.30,272.27 467.70,272.16 467.10,271.99 466.50,271.75 465.90,271.49 465.30,271.22 464.70,270.96 464.10,270.75 463.50,270.59 462.90,270.51 462.30,270.51 461.70,270.59 461.10,270.75 460.50,270.96 459.90,271.22 459.30,271.49 458.70,271.75 458.10,271.99 457.50,272.16 456.90,272.27 456.30,272.30 455.70,272.24 455.10,272.11 454.50,271.91 453.90,271.67 453.30,271.40 452.70,271.13 452.10,270.89 451.50,270.69 450.90,270.56 450.30,270.50 449.70,270.53 449.10,270.64 448.50,270.81 447.90,271.05 447.30,271.31 446.70,271.58 446.10,271.84 445.50,272.05 444.90,272.21 444.30,272.29 443.70,272.29 443.10,272.21 442.50,272.05 441.90,271.84 441.30,271.58 440.70,271.31 440.10,271.05 439.50,270.81 438.90,270.64 438.30,270.53 437.70,270.50 437.10,270.56 436.50,270.69 435.90,270.89 435.30,271.13 434.70,271.40 434.10,271.67 433.50,271.91 432.90,272.11 432.30,272.24 431.70,272.30 431.10,272.27 430.50,272.16 429.90,271.99 429.30,271.75 428.70,271.49 428.10,271.22 427.50,270.96 426.90,270.75 426.30,270.59 425.70,270.51 425.10,270.51 424.50,270.59 423.90,270.75 423.30,270.96 422.70,271.22 422.10,271.49 421.50,271.75 420.90,271.99 420.30,272.16 419.70,272.27 419.10,272.30 418.50,272.24 417.90,272.11 417.30,271.91 416.70,271.67 416.10,271.40 415.50,271.13 414.90,270.89 414.30,270.69 413.70,270.56 413.10,270.50 412.50,270.53 411.90,270.64 411.30,270.81 410.70,271.05 410.10,271.31 409.50,271.58 408.90,271.84 408.30,272.05 407.70,272.21 407.10,272.29 406.50,272.29 405.90,272.21 405.30,272.05 404.70,271.84 404.10,271.58 403.50,271.31 402.90,271.05 402.30,270.81 401.70,270.64 401.10,270.53 400.50,270.50 399.90,270.56 399.30,270.69 398.70,270.89 398.10,271.13 397.50,271.40 396.90,271.67 396.30,271.91 395.70,272.11 395.10,272.24 394.50,272.30 393.90,272.27 393.30,272.16 392.70,271.99 392.10,271.75 391.50,271.49 390.90,271.22 390.30,270.96 389.70,270.75 389.10,270.59 388.50,270.51 387.90,270.51 387.30,270.59 386.70,270.75 386.10,270.96 385.50,271.22 384.90,271.49 384.30,271.75 383.70,271.99 383.10,272.16 382.50,272.27 381.90,272.30 381.30,272.24 380.70,272.11 380.10,271.91 379.50,271.67 378.90,271.40 378.30,271.13 377.70,270.89 377.10,270.69 376.50,270.56 375.90,270.50 375.30,270.53 374.70,270.64 374.10,270.81 373.50,271.05 372.90,271.31 372.30,271.58 371.70,271.84 371.10,272.05 370.50,272.21 369.90,272.29 369.30,272.29 368.70,272.21 368.10,272.05 367.50,271.84 366.90,271.58 366.30,271.31 365.70,271.05 365.10,270.81 364.50,270.64 363.90,270.53 363.30,270.50 362.70,270.56 362.10,270.69 361.50,270.89 360.90,271.13 360.30,271.40 359.70,271.67 359.10,271.91 358.50,272.11 357.90,272.24 357.30,272.30 356.70,272.27 356.10,272.16 355.50,271.99 354.90,271.75 354.30,271.49 353.70,271.22 353.10,270.96 352.50,270.75 351.90,270.59 351.30,270.51 350.70,270.51 350.10,270.59 349.50,270.75 348.90,270.96 348.30,271.22 347.70,271.49 347.10,271.75 346.50,271.99 345.90,272.16 345.30,272.27 344.70,272.30 344.10,272.24 343.50,272.11 342.90,271.91 342.30,271.67 341.70,271.40 341.10,271.13 340.50,270.89 339.90,270.69 339.30,270.56 338.70,270.50 338.10,270.53 337.50,270.64 336.90,270.81 336.30,271.05 335.70,271.31 335.10,271.58 334.50,271.84 333.90,272.05 333.30,272.21 332.70,272.29 332.10,272.29 331.50,272.21 330.90,272.05 330.30,271.84 329.70,271.58 329.10,271.31 328.50,271.05 327.90,270.81 327.30,270.64 326.70,270.53 326.10,270.50 325.50,270.56 324.90,270.69 324.30,270.89 323.70,271.13 323.10,271.40 322.50,271.67 321.90,271.91 321.30,272.11 320.70,272.24 320.10,272.30 319.50,272.27 318.90,272.16 318.30,271.99 317.70,271.75 317.10,271.49 316.50,271.22 315.90,270.96 315.30,270.75 314.70,270.59 314.10,270.51 313.50,270.51 312.90,270.59 312.30,270.75 311.70,270.96 311.10,271.22 310.50,271.49 309.90,271.75 309.30,271.99 308.70,272.16 308.10,272.27 307.50,272.30 306.90,272.24 306.30,272.11 305.70,271.91 305.10,271.67 304.50,271.40 303.90,271.13 303.30,270.89 302.70,270.69 302.10,270.56 301.50,270.50 300.90,270.53 300.30,270.64 299.70,270.81 299.10,271.05 298.50,271.31 297.90,271.58 297.30,271.84 296.70,272.05 296.10,272.21 295.50,272.29 294.90,272.29 294.30,272.21 293.70,272.05 293.10,271.84 292.50,271.58 291.90,271.31 291.30,271.05 290.70,270.81 290.10,270.64 289.50,270.53 288.90,270.50 288.30,270.56 287.70,270.69 287.10,270.89 286.50,271.13 285.90,271.40 285.30,271.67 284.70,271.91 284.10,272.11 283.50,272.24 282.90,272.30 282.30,272.27 281.70,272.16 281.10,271.99 280.50,271.75 279.90,271.49 279.30,271.22 278.70,270.96 278.10,270.75 277.50,270.59 276.90,270.51 276.30,270.51 275.70,270.59 275.10,270.75 274.50,270.96 273.90,271.22 273.30,271.49 272.70,271.75 272.10,271.99 271.50,272.16 270.90,272.27 270.30,272.30 269.70,272.24 269.10,272.11 268.50,271.91 267.90,271.67 267.30,271.40 266.70,271.13 266.10,270.89 265.50,270.69 264.90,270.56 264.30,270.50 263.70,270.53 263.10,270.64 262.50,270.81 261.90,271.05 261.30,271.31 260.70,271.58 260.10,271.84 259.50,272.05 258.90,272.21 258.30,272.29 257.70,272.29 257.10,272.21 256.50,272.05 255.90,271.84 255.30,271.58 254.70,271.31 254.10,271.05 253.50,270.81 252.90,270.64 252.30,270.53 251.70,270.50 251.10,270.56 250.50,270.69 249.90,270.89 249.30,271.13 248.70,271.40 248.10,271.67 247.50,271.91 246.90,272.11 246.30,272.24 245.70,272.30 245.10,272.27 244.50,272.16 243.90,271.99 243.30,271.75 242.70,271.49 242.10,271.22 241.50,270.96 240.90,270.75 240.30,270.59 239.70,270.51 239.10,270.51 238.50,270.59 237.90,270.75 237.30,270.96 236.70,271.22 236.10,271.49 235.50,271.75 234.90,271.99 234.30,272.16 233.70,272.27 233.10,272.30 232.50,272.24 231.90,272.11 231.30,271.91 230.70,271.67 230.10,271.40 229.50,271.13 228.90,270.89 228.30,270.69 227.70,270.56 227.10,270.50 226.50,270.53 225.90,270.64 225.30,270.81 224.70,271.05 224.10,271.31 223.50,271.58 222.90,271.84 222.30,272.05 221.70,272.21 221.10,272.29 220.50,272.29 219.90,272.21 219.30,272.05 218.70,271.84 218.10,271.58 217.50,271.31 216.90,271.05 216.30,270.81 215.70,270.64 215.10,270.53 214.50,270.50 213.90,270.56 213.30,270.69 212.70,270.89 212.10,271.13 211.50,271.40 210.90,271.67 210.30,271.91 209.70,272.11 209.10,272.24 208.50,272.30 207.90,272.27 207.30,272.16 206.70,271.99 206.10,271.75 205.50,271.49 204.90,271.22 204.30,270.96 203.70,270.75 203.10,270.59 202.50,270.51 201.90,270.51 201.30,270.59 200.70,270.75 200.10,270.96 199.50,271.22 198.90,271.49 198.30,271.75 197.70,271.99 197.10,272.16 196.50,272.27 195.90,272.30 195.30,272.24 194.70,272.11 194.10,271.91 193.50,271.67 192.90,271.40 192.30,271.13 191.70,270.89 191.10,270.69 190.50,270.56 189.90,270.50 189.30,270.53 188.70,270.64 188.10,270.81 187.50,271.05 186.90,271.31 186.30,271.58 185.70,271.84 185.10,272.05 184.50,272.21 183.90,272.29 183.30,272.29 182.70,272.21 182.10,272.05 181.50,271.84 180.90,271.58 180.30,271.31 179.70,271.05 179.10,270.81 178.50,270.64 177.90,270.53 177.30,270.50 176.70,270.56 176.10,270.69 175.50,270.89 174.90,271.13 174.30,271.40 173.70,271.67 173.10,271.91 172.50,272.11 171.90,272.24 171.30,272.30 170.70,272.27 170.10,272.16 169.50,271.99 168.90,271.75 168.30,271.49 167.70,271.22 167.10,270.96 166.50,270.75 165.90,270.59 165.30,270.51 164.70,270.51 164.10,270.59 163.50,270.75 162.90,270.96 162.30,271.22 161.70,271.49 161.10,271.75 160.50,271.99 159.90,272.16 159.30,272.27 158.70,272.30 158.10,272.24 157.50,272.11 156.90,271.91 156.30,271.67 155.70,271.40 155.10,271.13 154.50,270.89 153.90,270.69 153.30,270.56 152.70,270.50 152.10,270.53 151.50,270.64 150.90,270.81 150.30,271.05 149.70,271.31 149.10,271.58 148.50,271.84 147.90,272.05 147.30,272.21 146.70,272.29 146.10,272.29 145.50,272.21 144.90,272.05 144.30,271.84 143.70,271.58 143.10,271.31 142.50,271.05 141.90,270.81 141.30,270.64 140.70,270.53 140.10,270.50 139.50,270.56 138.90,270.69 138.30,270.89 137.70,271.13 137.10,271.40 136.50,271.67 135.90,271.91 135.30,272.11 134.70,272.24 134.10,272.30 133.50,272.27 132.90,272.16 132.30,271.99 131.70,271.75 131.10,271.49 130.50,271.22 129.90,270.96 129.30,270.75 128.70,270.59 128.10,270.51 127.50,270.51 126.90,270.59 126.30,270.75 125.70,270.96 125.10,271.22 124.50,271.49 123.90,271.75 123.30,271.99 122.70,272.16 122.10,272.27 121.50,272.30 120.90,272.24 120.30,272.11 119.70,271.91 119.10,271.67 118.50,271.40 117.90,271.13 117.30,270.89 116.70,270.69 116.10,270.56 115.50,270.50 114.90,270.53 114.30,270.64 113.70,270.81 113.10,271.05 112.50,271.31 111.90,271.58 111.30,271.84 110.70,272.05 110.10,272.21 109.50,272.29 108.90,272.29 108.30,272.21 107.70,272.05 107.10,271.84 106.50,271.58 105.90,271.31 105.30,271.05 104.70,270.81 104.10,270.64 103.50,270.53 102.90,270.50 102.30,270.56 101.70,270.69 101.10,270.89 100.50,271.13 99.90,271.40 99.30,271.67 98.70,271.91 98.10,272.11 97.50,272.24 96.90,272.30 96.30,272.27 95.70,272.16 95.10,271.99 94.50,271.75 93.90,271.49 93.30,271.22 92.70,270.96 92.10,270.75 91.50,270.59 90.90,270.51 90.30,270.51 89.70,270.59 89.10,270.75 88.50,270.96 87.90,271.22 87.30,271.49 86.70,271.75 86.10,271.99 85.50,272.16 84.90,272.27 84.30,272.30 83.70,272.24 83.10,272.11 82.50,271.91 81.90,271.67 81.30,271.40 80.70,271.13 80.10,270.89 79.50,270.69 78.90,270.56 78.30,270.50 77.70,270.53 77.10,270.64 76.50,270.81 75.90,271.05 75.30,271.31 74.70,271.58 74.10,271.84 73.50,272.05 72.90,272.21 72.30,272.29 71.70,272.29 71.10,272.21 70.50,272.05 69.90,271.84 69.30,271.58 68.70,271.31 68.10,271.05 67.50,270.81 66.90,270.64 66.30,270.53 65.70,270.50 65.10,270.56 64.50,270.69 63.90,270.89 63.30,271.13 62.70,271.40 62.10,271.67 61.50,271.91 60.90,272.11 60.30,272.24 59.70,272.30 59.10,272.27 58.50,272.16 57.90,271.99 57.30,271.75 56.70,271.49 56.10,271.22 55.50,270.96 54.90,270.75 54.30,270.59 53.70,270.51 53.10,270.51 52.50,270.59 51.90,270.75 51.30,270.96 50.70,271.22" fill="#ffffff"/>
<polyline points="50.70,268.22 51.30,267.96 51.90,267.75 52.50,267.59 53.10,267.51 53.70,267.51 54.30,267.59 54.90,267.75 55.50,267.96 56.10,268.22 56.70,268.49 57.30,268.75 57.90,268.99 58.50,269.16 59.10,269.27 59.70,269.30 60.30,269.24 60.90,269.11 61.50,268.91 62.10,268.67 62.70,268.40 63.30,268.13 63.90,267.89 64.50,267.69 65.10,267.56 65.70,267.50 66.30,267.53 66.90,267.64 67.50,267.81 68.10,268.05 68.70,268.31 69.30,268.58 69.90,268.84 70.50,269.05 71.10,269.21 71.70,269.29 72.30,269.29 72.90,269.21 73.50,269.05 74.10,268.84 74.70,268.58 75.30,268.31 75.90,268.05 76.50,267.81 77.10,267.64 77.70,267.53 78.30,267.50 78.90,267.56 79.50,267.69 80.10,267.89 80.70,268.13 81.30,268.40 81.90,268.67 82.50,268.91 83.10,269.11 83.70,269.24 84.30,269.30 84.90,269.27 85.50,269.16 86.10,268.99 86.70,268.75 87.30,268.49 87.90,268.22 88.50,267.96 89.10,267.75 89.70,267.59 90.30,267.51 90.90,267.51 91.50,267.59 92.10,267.75 92.70,267.96 93.30,268.22 93.90,268.49 94.50,268.75 95.10,268.99 95.70,269.16 96.30,269.27 96.90,269.30 97.50,269.24 98.10,269.11 98.70,268.91 99.30,268.67 99.90,268.40 100.50,268.13 101.10,267.89 101.70,267.69 102.30,267.56 102.90,267.50 103.50,267.53 104.10,267.64 104.70,267.81 105.30,268.05 105.90,268.31 106.50,268.58 107.10,268.84 107.70,269.05 108.30,269.21 108.90,269.29 109.50,269.29 110.10,269.21 110.70,269.05 111.30,268.84 111.90,268.58 112.50,268.31 113.10,268.05 113.70,267.81 114.30,267.64 114.90,267.53 115.50,267.50 116.10,267.56 116.70,267.69 117.30,267.89 117.90,268.13 118.50,268.40 119.10,268.67 119.70,268.91 120.30,269.11 120.90,269.24 121.50,269.30 122.10,269.27 122.70,269.16 123.30,268.99 123.90,268.75 124.50,268.49 125.10,268.22 125.70,267.96 126.30,267.75 126.90,267.59 127.50,267.51 128.10,267.51 128.70,267.59 129.30,267.75 129.90,267.96 130.50,268.22 131.10,268.49 131.70,268.75 132.30,268.99 132.90,269.16 133.50,269.27 134.10,269.30 134.70,269.24 135.30,269.11 135.90,268.91 136.50,268.67 137.10,268.40 137.70,268.13 138.30,267.89 138.90,267.69 139.50,267.56 140.10,267.50 140.70,267.53 141.30,267.64 141.90,267.81 142.50,268.05 143.10,268.31 143.70,268.58 144.30,268.84 144.90,269.05 145.50,269.21 146.10,269.29 146.70,269.29 147.30,269.21 147.90,269.05 148.50,268.84 149.10,268.58 149.70,268.31 150.30,268.05 150.90,267.81 151.50,267.64 152.10,267.53 152.70,267.50 153.30,267.56 153.90,267.69 154.50,267.89 155.10,268.13 155.70,268.40 156.30,268.67 156.90,268.91 157.50,269.11 158.10,269.24 158.70,269.30 159.30,269.27 159.90,269.16 160.50,268.99 161.10,268.75 161.70,268.49 162.30,268.22 162.90,267.96 163.50,267.75 164.10,267.59 164.70,267.51 165.30,267.51 165.90,267.59 166.50,267.75 167.10,267.96 167.70,268.22 168.30,268.49 168.90,268.75 169.50,268.99 170.10,269.16 170.70,269.27 171.30,269.30 171.90,269.24 172.50,269.11 173.10,268.91 173.70,268.67 174.30,268.40 174.90,268.13 175.50,267.89 176.10,267.69 176.70,267.56 177.30,267.50 177.90,267.53 178.50,267.64 179.10,267.81 179.70,268.05 180.30,268.31 180.90,268.58 181.50,268.84 182.10,269.05 182.70,269.21 183.30,269.29 183.90,269.29 184.50,269.21 185.10,269.05 185.70,268.84 186.30,268.58 186.90,268.31 187.50,268.05 188.10,267.81 188.70,267.64 189.30,267.53 189.90,267.50 190.50,267.56 191.10,267.69 191.70,267.89 192.30,268.13 192.90,268.40 193.50,268.67 194.10,268.91 194.70,269.11 195.30,269.24 195.90,269.30 196.50,269.27 197.10,269.16 197.70,268.99 198.30,268.75 198.90,268.49 199.50,268.22 200.10,267.96 200.70,267.75 201.30,267.59 201.90,267.51 202.50,267.51 203.10,267.59 203.70,267.75 204.30,267.96 204.90,268.22 205.50,268.49 206.10,268.75 206.70,268.99 207.30,269.16 207.90,269.27 208.50,269.30 209.10,269.24 209.70,269.11 210.30,268.91 210.90,268.67 211.50,268.40 212.10,268.13 212.70,267.89 213.30,267.69 213.90,267.56 214.50,267.50 215.10,267.53 215.70,267.64 216.30,267.81 216.90,268.05 217.50,268.31 218.10,268.58 218.70,268.84 219.30,269.05 219.90,269.21 220.50,269.29 221.10,269.29 221.70,269.21 222.30,269.05 222.90,268.84 223.50,268.58 224.10,268.31 224.70,268.05 225.30,267.81 225.90,267.64 226.50,267.53 227.10,267.50 227.70,267.56 228.30,267.69 228.90,267.89 229.50,268.13 230.10,268.40 230.70,268.67 231.30,268.91 231.90,269.11 232.50,269.24 233.10,269.30 233.70,269.27 234.30,269.16 234.90,268.99 235.50,268.75 236.10,268.49 236.70,268.22 237.30,267.96 237.90,267.75 238.50,267.59 239.10,267.51 239.70,267.51 240.30,267.59 240.90,267.75 241.50,267.96 242.10,268.22 242.70,268.49 243.30,268.75 243.90,268.99 244.50,269.16 245.10,269.27 245.70,269.30 246.30,269.24 246.90,269.11 247.50,268.91 248.10,268.67 248.70,268.40 249.30,268.13 249.90,267.89 250.50,267.69 251.10,267.56 251.70,267.50 252.30,267.53 252.90,267.64 253.50,267.81 254.10,268.05 254.70,268.31 255.30,268.58 255.90,268.84 256.50,269.05 257.10,269.21 257.70,269.29 258.30,269.29 258.90,269.21 259.50,269.05 260.10,268.84 260.70,268.58 261.30,268.31 261.90,268.05 262.50,267.81 263.10,267.64 263.70,267.53 264.30,267.50 264.90,267.56 265.50,267.69 266.10,267.89 266.70,268.13 267.30,268.40 267.90,268.67 268.50,268.91 269.10,269.11 269.70,269.24 270.30,269.30 270.90,269.27 271.50,269.16 272.10,268.99 272.70,268.75 273.30,268.49 273.90,268.22 274.50,267.96 275.10,267.75 275.70,267.59 276.30,267.51 276.90,267.51 277.50,267.59 278.10,267.75 278.70,267.96 279.30,268.22 279.90,268.49 280.50,268.75 281.10,268.99 281.70,269.16 282.30,269.27 282.90,269.30 283.50,269.24 284.10,269.11 284.70,268.91 285.30,268.67 285.90,268.40 286.50,268.13 287.10,267.89 287.70,267.69 288.30,267.56 288.90,267.50 289.50,267.53 290.10,267.64 290.70,267.81 291.30,268.05 291.90,268.31 292.50,268.58 293.10,268.84 293.70,269.05 294.30,269.21 294.90,269.29 295.50,269.29 296.10,269.21 296.70,269.05 297.30,268.84 297.90,268.58 298.50,268.31 299.10,268.05 299.70,267.81 300.30,267.64 300.90,267.53 301.50,267.50 302.10,267.56 302.70,267.69 303.30,267.89 303.90,268.13 304.50,268.40 305.10,268.67 305.70,268.91 306.30,269.11 306.90,269.24 307.50,269.30 308.10,269.27 308.70,269.16 309.30,268.99 309.90,268.75 310.50,268.49 311.10,268.22 311.70,267.96 312.30,267.75 312.90,267.59 313.50,267.51 314.10,267.51 314.70,267.59 315.30,267.75 315.90,267.96 316.50,268.22 317.10,268.49 317.70,268.75 318.30,268.99 318.90,269.16 319.50,269.27 320.10,269.30 320.70,269.24 321.30,269.11 321.90,268.91 322.50,268.67 323.10,268.40 323.70,268.13 324.30,267.89 324.90,267.69 325.50,267.56 326.10,267.50 326.70,267.53 327.30,267.64 327.90,267.81 328.50,268.05 329.10,268.31 329.70,268.58 330.30,268.84 330.90,269.05 331.50,269.21 332.10,269.29 332.70,269.29 333.30,269.21 333.90,269.05 334.50,268.84 335.10,268.58 335.70,268.31 336.30,268.05 336.90,267.81 337.50,267.64 338.10,267.53 338.70,267.50 339.30,267.56 339.90,267.69 340.50,267.89 341.10,268.13 341.70,268.40 342.30,268.67 342.90,268.91 343.50,269.11 344.10,269.24 344.70,269.30 345.30,269.27 345.90,269.16 346.50,268.99 347.10,268.75 347.70,268.49 348.30,268.22 348.90,267.96 349.50,267.75 350.10,267.59 350.70,267.51 351.30,267.51 351.90,267.59 352.50,267.75 353.10,267.96 353.70,268.22 354.30,268.49 354.90,268.75 355.50,268.99 356.10,269.16 356.70,269.27 357.30,269.30 357.90,269.24 358.50,269.11 359.10,268.91 359.70,268.67 360.30,268.40 360.90,268.13 361.50,267.89 362.10,267.69 362.70,267.56 363.30,267.50 363.90,267.53 364.50,267.64 365.10,267.81 365.70,268.05 366.30,268.31 366.90,268.58 367.50,268.84 368.10,269.05 368.70,269.21 369.30,269.29 369.90,269.29 370.50,269.21 371.10,269.05 371.70,268.84 372.30,268.58 372.90,268.31 373.50,268.05 374.10,267.81 374.70,267.64 375.30,267.53 375.90,267.50 376.50,267.56 377.10,267.69 377.70,267.89 378.30,268.13 378.90,268.40 379.50,268.67 380.10,268.91 380.70,269.11 381.30,269.24 381.90,269.30 382.50,269.27 383.10,269.16 383.70,268.99 384.30,268.75 384.90,268.49 385.50,268.22 386.10,267.96 386.70,267.75 387.30,267.59 387.90,267.51 388.50,267.51 389.10,267.59 389.70,267.75 390.30,267.96 390.90,268.22 391.50,268.49 392.10,268.75 392.70,268.99 393.30,269.16 393.90,269.27 394.50,269.30 395.10,269.24 395.70,269.11 396.30,268.91 396.90,268.67 397.50,268.40 398.10,268.13 398.70,267.89 399.30,267.69 399.90,267.56 400.50,267.50 401.10,267.53 401.70,267.64 402.30,267.81 402.90,268.05 403.50,268.31 404.10,268.58 404.70,268.84 405.30,269.05 405.90,269.21 406.50,269.29 407.10,269.29 407.70,269.21 408.30,269.05 408.90,268.84 409.50,268.58 410.10,268.31 410.70,268.05 411.30,267.81 411.90,267.64 412.50,267.53 413.10,267.50 413.70,267.56 414.30,267.69 414.90,267.89 415.50,268.13 416.10,268.40 416.70,268.67 417.30,268.91 417.90,269.11 418.50,269.24 419.10,269.30 419.70,269.27 420.30,269.16 420.90,268.99 421.50,268.75 422.10,268.49 422.70,268.22 423.30,267.96 423.90,267.75 424.50,267.59 425.10,267.51 425.70,267.51 426.30,267.59 426.90,267.75 427.50,267.96 428.10,268.22 428.70,268.49 429.30,268.75 429.90,268.99 430.50,269.16 431.10,269.27 431.70,269.30 432.30,269.24 432.90,269.11 433.50,268.91 434.10,268.67 434.70,268.40 435.30,268.13 435.90,267.89 436.50,267.69 437.10,267.56 437.70,267.50 438.30,267.53 438.90,267.64 439.50,267.81 440.10,268.05 440.70,268.31 441.30,268.58 441.90,268.84 442.50,269.05 443.10,269.21 443.70,269.29 444.30,269.29 444.90,269.21 445.50,269.05 446.10,268.84 446.70,268.58 447.30,268.31 447.90,268.05 448.50,267.81 449.10,267.64 449.70,267.53 450.30,267.50 450.90,267.56 451.50,267.69 452.10,267.89 452.70,268.13 453.30,268.40 453.90,268.67 454.50,268.91 455.10,269.11 455.70,269.24 456.30,269.30 456.90,269.27 457.50,269.16 458.10,268.99 458.70,268.75 459.30,268.49 459.90,268.22 460.50,267.96 461.10,267.75 461.70,267.59 462.30,267.51 462.90,267.51 463.50,267.59 464.10,267.75 464.70,267.96 465.30,268.22 465.90,268.49 466.50,268.75 467.10,268.99 467.70,269.16 468.30,269.27 468.90,269.30 469.50,269.24 470.10,269.11 470.70,268.91 471.30,268.67 471.90,268.40 472.50,268.13 473.10,267.89 473.70,267.69 474.30,267.56 474.90,267.50 475.50,267.53 476.10,267.64 476.70,267.81 477.30,268.05 477.90,268.31 478.50,268.58 479.10,268.84 479.70,269.05 480.30,269.21 480.90,269.29 481.50,269.29 482.10,269.21 482.70,269.05 483.30,268.84 483.90,268.58 484.50,268.31 485.10,268.05 485.70,267.81 486.30,267.64 486.90,267.53 487.50,267.50 488.10,267.56 488.70,267.69 489.30,267.89 489.90,268.13 490.50,268.40 491.10,268.67 491.70,268.91 492.30,269.11 492.90,269.24 493.50,269.30" fill="none" stroke="#d2d2d2" stroke-width="0.8"/>
<polyline points="50.70,271.22 51.30,270.96 51.90,270.75 52.50,270.59 53.10,270.51 53.70,270.51 54.30,270.59 54.90,270.75 55.50,270.96 56.10,271.22 56.70,271.49 57.30,271.75 57.90,271.99 58.50,272.16 59.10,272.27 59.70,272.30 60.30,272.24 60.90,272.11 61.50,271.91 62.10,271.67 62.70,271.40 63.30,271.13 63.90,270.89 64.50,270.69 65.10,270.56 65.70,270.50 66.30,270.53 66.90,270.64 67.50,270.81 68.10,271.05 68.70,271.31 69.30,271.58 69.90,271.84 70.50,272.05 71.10,272.21 71.70,272.29 72.30,272.29 72.90,272.21 73.50,272.05 74.10,271.84 74.70,271.58 75.30,271.31 75.90,271.05 76.50,270.81 77.10,270.64 77.70,270.53 78.30,270.50 78.90,270.56 79.50,270.69 80.10,270.89 80.70,271.13 81.30,271.40 81.90,271.67 82.50,271.91 83.10,272.11 83.70,272.24 84.30,272.30 84.90,272.27 85.50,272.16 86.10,271.99 86.70,271.75 87.30,271.49 87.90,271.22 88.50,270.96 89.10,270.75 89.70,270.59 90.30,270.51 90.90,270.51 91.50,270.59 92.10,270.75 92.70,270.96 93.30,271.22 93.90,271.49 94.50,271.75 95.10,271.99 95.70,272.16 96.30,272.27 96.90,272.30 97.50,272.24 98.10,272.11 98.70,271.91 99.30,271.67 99.90,271.40 100.50,271.13 101.10,270.89 101.70,270.69 102.30,270.56 102.90,270.50 103.50,270.53 104.10,270.64 104.70,270.81 105.30,271.05 105.90,271.31 106.50,271.58 107.10,271.84 107.70,272.05 108.30,272.21 108.90,272.29 109.50,272.29 110.10,272.21 110.70,272.05 111.30,271.84 111.90,271.58 112.50,271.31 113.10,271.05 113.70,270.81 114.30,270.64 114.90,270.53 115.50,270.50 116.10,270.56 116.70,270.69 117.30,270.89 117.90,271.13 118.50,271.40 119.10,271.67 119.70,271.91 120.30,272.11 120.90,272.24 121.50,272.30 122.10,272.27 122.70,272.16 123.30,271.99 123.90,271.75 124.50,271.49 125.10,271.22 125.70,270.96 126.30,270.75 126.90,270.59 127.50,270.51 128.10,270.51 128.70,270.59 129.30,270.75 129.90,270.96 130.50,271.22 131.10,271.49 131.70,271.75 132.30,271.99 132.90,272.16 133.50,272.27 134.10,272.30 134.70,272.24 135.30,272.11 135.90,271.91 136.50,271.67 137.10,271.40 137.70,271.13 138.30,270.89 138.90,270.69 139.50,270.56 140.10,270.50 140.70,270.53 141.30,270.64 141.90,270.81 142.50,271.05 143.10,271.31 143.70,271.58 144.30,271.84 144.90,272.05 145.50,272.21 146.10,272.29 146.70,272.29 147.30,272.21 147.90,272.05 148.50,271.84 149.10,271.58 149.70,271.31 150.30,271.05 150.90,270.81 151.50,270.64 152.10,270.53 152.70,270.50 153.30,270.56 153.90,270.69 154.50,270.89 155.10,271.13 155.70,271.40 156.30,271.67 156.90,271.91 157.50,272.11 158.10,272.24 158.70,272.30 159.30,272.27 159.90,272.16 160.50,271.99 161.10,271.75 161.70,271.49 162.30,271.22 162.90,270.96 163.50,270.75 164.10,270.59 164.70,270.51 165.30,270.51 165.90,270.59 166.50,270.75 167.10,270.96 167.70,271.22 168.30,271.49 168.90,271.75 169.50,271.99 170.10,272.16 170.70,272.27 171.30,272.30 171.90,272.24 172.50,272.11 173.10,271.91 173.70,271.67 174.30,271.40 174.90,271.13 175.50,270.89 176.10,270.69 176.70,270.56 177.30,270.50 177.90,270.53 178.50,270.64 179.10,270.81 179.70,271.05 180.30,271.31 180.90,271.58 181.50,271.84 182.10,272.05 182.70,272.21 183.30,272.29 183.90,272.29 184.50,272.21 185.10,272.05 185.70,271.84 186.30,271.58 186.90,271.31 187.50,271.05 188.10,270.81 188.70,270.64 189.30,270.53 189.90,270.50 190.50,270.56 191.10,270.69 191.70,270.89 192.30,271.13 192.90,271.40 193.50,271.67 194.10,271.91 194.70,272.11 195.30,272.24 195.90,272.30 196.50,272.27 197.10,272.16 197.70,271.99 198.30,271.75 198.90,271.49 199.50,271.22 200.10,270.96 200.70,270.75 201.30,270.59 201.90,270.51 202.50,270.51 203.10,270.59 203.70,270.75 204.30,270.96 204.90,271.22 205.50,271.49 206.10,271.75 206.70,271.99 207.30,272.16 207.90,272.27 208.50,272.30 209.10,272.24 209.70,272.11 210.30,271.91 210.90,271.67 211.50,271.40 212.10,271.13 212.70,270.89 213.30,270.69 213.90,270.56 214.50,270.50 215.10,270.53 215.70,270.64 216.30,270.81 216.90,271.05 217.50,271.31 218.10,271.58 218.70,271.84 219.30,272.05 219.90,272.21 220.50,272.29 221.10,272.29 221.70,272.21 222.30,272.05 222.90,271.84 223.50,271.58 224.10,271.31 224.70,271.05 225.30,270.81 225.90,270.64 226.50,270.53 227.10,270.50 227.70,270.56 228.30,270.69 228.90,270.89 229.50,271.13 230.10,271.40 230.70,271.67 231.30,271.91 231.90,272.11 232.50,272.24 233.10,272.30 233.70,272.27 234.30,272.16 234.90,271.99 235.50,271.75 236.10,271.49 236.70,271.22 237.30,270.96 237.90,270.75 238.50,270.59 239.10,270.51 239.70,270.51 240.30,270.59 240.90,270.75 241.50,270.96 242.10,271.22 242.70,271.49 243.30,271.75 243.90,271.99 244.50,272.16 245.10,272.27 245.70,272.30 246.30,272.24 246.90,272.11 247.50,271.91 248.10,271.67 248.70,271.40 249.30,271.13 249.90,270.89 250.50,270.69 251.10,270.56 251.70,270.50 252.30,270.53 252.90,270.64 253.50,270.81 254.10,271.05 254.70,271.31 255.30,271.58 255.90,271.84 256.50,272.05 257.10,272.21 257.70,272.29 258.30,272.29 258.90,272.21 259.50,272.05 260.10,271.84 260.70,271.58 261.30,271.31 261.90,271.05 262.50,270.81 263.10,270.64 263.70,270.53 264.30,270.50 264.90,270.56 265.50,270.69 266.10,270.89 266.70,271.13 267.30,271.40 267.90,271.67 268.50,271.91 269.10,272.11 269.70,272.24 270.30,272.30 270.90,272.27 271.50,272.16 272.10,271.99 272.70,271.75 273.30,271.49 273.90,271.22 274.50,270.96 275.10,270.75 275.70,270.59 276.30,270.51 276.90,270.51 277.50,270.59 278.10,270.75 278.70,270.96 279.30,271.22 279.90,271.49 280.50,271.75 281.10,271.99 281.70,272.16 282.30,272.27 282.90,272.30 283.50,272.24 284.10,272.11 284.70,271.91 285.30,271.67 285.90,271.40 286.50,271.13 287.10,270.89 287.70,270.69 288.30,270.56 288.90,270.50 289.50,270.53 290.10,270.64 290.70,270.81 291.30,271.05 291.90,271.31 292.50,271.58 293.10,271.84 293.70,272.05 294.30,272.21 294.90,272.29 295.50,272.29 296.10,272.21 296.70,272.05 297.30,271.84 297.90,271.58 298.50,271.31 299.10,271.05 299.70,270.81 300.30,270.64 300.90,270.53 301.50,270.50 302.10,270.56 302.70,270.69 303.30,270.89 303.90,271.13 304.50,271.40 305.10,271.67 305.70,271.91 306.30,272.11 306.90,272.24 307.50,272.30 308.10,272.27 308.70,272.16 309.30,271.99 309.90,271.75 310.50,271.49 311.10,271.22 311.70,270.96 312.30,270.75 312.90,270.59 313.50,270.51 314.10,270.51 314.70,270.59 315.30,270.75 315.90,270.96 316.50,271.22 317.10,271.49 317.70,271.75 318.30,271.99 318.90,272.16 319.50,272.27 320.10,272.30 320.70,272.24 321.30,272.11 321.90,271.91 322.50,271.67 323.10,271.40 323.70,271.13 324.30,270.89 324.90,270.69 325.50,270.56 326.10,270.50 326.70,270.53 327.30,270.64 327.90,270.81 328.50,271.05 329.10,271.31 329.70,271.58 330.30,271.84 330.90,272.05 331.50,272.21 332.10,272.29 332.70,272.29 333.30,272.21 333.90,272.05 334.50,271.84 335.10,271.58 335.70,271.31 336.30,271.05 336.90,270.81 337.50,270.64 338.10,270.53 338.70,270.50 339.30,270.56 339.90,270.69 340.50,270.89 341.10,271.13 341.70,271.40 342.30,271.67 342.90,271.91 343.50,272.11 344.10,272.24 344.70,272.30 345.30,272.27 345.90,272.16 346.50,271.99 347.10,271.75 347.70,271.49 348.30,271.22 348.90,270.96 349.50,270.75 350.10,270.59 350.70,270.51 351.30,270.51 351.90,270.59 352.50,270.75 353.10,270.96 353.70,271.22 354.30,271.49 354.90,271.75 355.50,271.99 356.10,272.16 356.70,272.27 357.30,272.30 357.90,272.24 358.50,272.11 359.10,271.91 359.70,271.67 360.30,271.40 360.90,271.13 361.50,270.89 362.10,270.69 362.70,270.56 363.30,270.50 363.90,270.53 364.50,270.64 365.10,270.81 365.70,271.05 366.30,271.31 366.90,271.58 367.50,271.84 368.10,272.05 368.70,272.21 369.30,272.29 369.90,272.29 370.50,272.21 371.10,272.05 371.70,271.84 372.30,271.58 372.90,271.31 373.50,271.05 374.10,270.81 374.70,270.64 375.30,270.53 375.90,270.50 376.50,270.56 377.10,270.69 377.70,270.89 378.30,271.13 378.90,271.40 379.50,271.67 380.10,271.91 380.70,272.11 381.30,272.24 381.90,272.30 382.50,272.27 383.10,272.16 383.70,271.99 384.30,271.75 384.90,271.49 385.50,271.22 386.10,270.96 386.70,270.75 387.30,270.59 387.90,270.51 388.50,270.51 389.10,270.59 389.70,270.75 390.30,270.96 390.90,271.22 391.50,271.49 392.10,271.75 392.70,271.99 393.30,272.16 393.90,272.27 394.50,272.30 395.10,272.24 395.70,272.11 396.30,271.91 396.90,271.67 397.50,271.40 398.10,271.13 398.70,270.89 399.30,270.69 399.90,270.56 400.50,270.50 401.10,270.53 401.70,270.64 402.30,270.81 402.90,271.05 403.50,271.31 404.10,271.58 404.70,271.84 405.30,272.05 405.90,272.21 406.50,272.29 407.10,272.29 407.70,272.21 408.30,272.05 408.90,271.84 409.50,271.58 410.10,271.31 410.70,271.05 411.30,270.81 411.90,270.64 412.50,270.53 413.10,270.50 413.70,270.56 414.30,270.69 414.90,270.89 415.50,271.13 416.10,271.40 416.70,271.67 417.30,271.91 417.90,272.11 418.50,272.24 419.10,272.30 419.70,272.27 420.30,272.16 420.90,271.99 421.50,271.75 422.10,271.49 422.70,271.22 423.30,270.96 423.90,270.75 424.50,270.59 425.10,270.51 425.70,270.51 426.30,270.59 426.90,270.75 427.50,270.96 428.10,271.22 428.70,271.49 429.30,271.75 429.90,271.99 430.50,272.16 431.10,272.27 431.70,272.30 432.30,272.24 432.90,272.11 433.50,271.91 434.10,271.67 434.70,271.40 435.30,271.13 435.90,270.89 436.50,270.69 437.10,270.56 437.70,270.50 438.30,270.53 438.90,270.64 439.50,270.81 440.10,271.05 440.70,271.31 441.30,271.58 441.90,271.84 442.50,272.05 443.10,272.21 443.70,272.29 444.30,272.29 444.90,272.21 445.50,272.05 446.10,271.84 446.70,271.58 447.30,271.31 447.90,271.05 448.50,270.81 449.10,270.64 449.70,270.53 450.30,270.50 450.90,270.56 451.50,270.69 452.10,270.89 452.70,271.13 453.30,271.40 453.90,271.67 454.50,271.91 455.10,272.11 455.70,272.24 456.30,272.30 456.90,272.27 457.50,272.16 458.10,271.99 458.70,271.75 459.30,271.49 459.90,271.22 460.50,270.96 461.10,270.75 461.70,270.59 462.30,270.51 462.90,270.51 463.50,270.59 464.10,270.75 464.70,270.96 465.30,271.22 465.90,271.49 466.50,271.75 467.10,271.99 467.70,272.16 468.30,272.27 468.90,272.30 469.50,272.24 470.10,272.11 470.70,271.91 471.30,271.67 471.90,271.40 472.50,271.13 473.10,270.89 473.70,270.69 474.30,270.56 474.90,270.50 475.50,270.53 476.10,270.64 476.70,270.81 477.30,271.05 477.90,271.31 478.50,271.58 479.10,271.84 479.70,272.05 480.30,272.21 480.90,272.29 481.50,272.29 482.10,272.21 482.70,272.05 483.30,271.84 483.90,271.58 484.50,271.31 485.10,271.05 485.70,270.81 486.30,270.64 486.90,270.53 487.50,270.50 488.10,270.56 488.70,270.69 489.30,270.89 489.90,271.13 490.50,271.40 491.10,271.67 491.70,271.91 492.30,272.11 492.90,272.24 493.50,272.30" fill="none" stroke="#d2d2d2" stroke-width="0.8"/>
<text x="547.9" y="416.9" font-size="6.8" fill="#757575" text-anchor="end" textLength="8.13" lengthAdjust="spacingAndGlyphs">0 €</text>
<line x1="550.6" y1="414.5" x2="553.8" y2="414.5" stroke="#a0a0a0" stroke-width="0.8"/>
<text x="547.9" y="381.77" font-size="6.8" fill="#757575" text-anchor="end" textLength="30.89" lengthAdjust="spacingAndGlyphs">1.000.000 €</text>
<line x1="550.6" y1="379.5" x2="553.8" y2="379.5" stroke="#a0a0a0" stroke-width="0.8"/>
<text x="547.9" y="346.64" font-size="6.8" fill="#757575" text-anchor="end" textLength="30.89" lengthAdjust="spacingAndGlyphs">2.000.000 €</text>
<line x1="550.6" y1="344.5" x2="553.8" y2="344.5" stroke="#a0a0a0" stroke-width="0.8"/>
<text x="547.9" y="311.51" font-size="6.8" fill="#757575" text-anchor="end" textLength="30.89" lengthAdjust="spacingAndGlyphs">3.000.000 €</text>
<line x1="550.6" y1="308.5" x2="553.8" y2="308.5" stroke="#a0a0a0" stroke-width="0.8"/>
<text x="547.9" y="276.38" font-size="6.8" fill="#757575" text-anchor="end" textLength="30.89" lengthAdjust="spacingAndGlyphs">4.000.000 €</text>
<line x1="550.6" y1="273.5" x2="553.8" y2="273.5" stroke="#a0a0a0" stroke-width="0.8"/>
<text x="547.9" y="241.25" font-size="6.8" fill="#757575" text-anchor="end" textLength="30.89" lengthAdjust="spacingAndGlyphs">5.000.000 €</text>
<line x1="550.6" y1="238.5" x2="553.8" y2="238.5" stroke="#a0a0a0" stroke-width="0.8"/>
<rect x="554.3" y="238.6" width="3.3" height="175.7" fill="#f0d935"/>
<rect x="558.59" y="238.6" width="3.3" height="175.7" fill="#f0d935"/>
<rect x="562.88" y="238.6" width="3.3" height="175.7" fill="#f0d935"/>
<rect x="567.17" y="238.6" width="3.3" height="175.7" fill="#f0d935"/>
<rect x="571.46" y="238.6" width="3.3" height="175.7" fill="#f0d935"/>
<rect x="575.75" y="238.6" width="3.3" height="175.7" fill="#f0d935"/>
<rect x="580.04" y="238.6" width="3.3" height="175.7" fill="#f0d935"/>
<rect x="584.33" y="238.6" width="3.3" height="175.7" fill="#f0d935"/>
<rect x="588.62" y="238.6" width="3.3" height="175.7" fill="#f0d935"/>
<rect x="592.91" y="238.6" width="3.3" height="175.7" fill="#f0d935"/>
<rect x="597.2" y="238.6" width="3.3" height="175.7" fill="#f0d935"/>
<rect x="601.49" y="238.6" width="3.3" height="175.7" fill="#f0d935"/>
<rect x="605.78" y="238.6" width="3.3" height="175.7" fill="#f0d935"/>
<rect x="610.07" y="238.6" width="3.3" height="175.7" fill="#f0d935"/>
<rect x="614.36" y="238.6" width="3.3" height="175.7" fill="#f0d935"/>
<rect x="618.65" y="238.6" width="3.3" height="175.7" fill="#f0d935"/>
<rect x="622.94" y="238.6" width="3.3" height="175.7" fill="#f0d935"/>
<rect x="627.23" y="238.6" width="3.3" height="175.7" fill="#f0d935"/>
<rect x="631.52" y="238.6" width="3.3" height="175.7" fill="#f0d935"/>
<rect x="635.81" y="238.6" width="3.3" height="175.7" fill="#f0d935"/>
<rect x="640.1" y="238.6" width="3.3" height="175.7" fill="#f0d935"/>
<rect x="644.39" y="238.6" width="3.3" height="175.7" fill="#f0d935"/>
<rect x="648.68" y="238.6" width="3.3" height="175.7" fill="#f0d935"/>
<rect x="652.97" y="238.6" width="3.3" height="175.7" fill="#f0d935"/>
<rect x="657.26" y="238.6" width="3.3" height="175.7" fill="#f0d935"/>
<rect x="661.55" y="238.6" width="3.3" height="175.7" fill="#f0d935"/>
<rect x="665.84" y="238.6" width="3.3" height="175.7" fill="#f0d935"/>
<rect x="670.13" y="238.6" width="3.3" height="175.7" fill="#f0d935"/>
<rect x="674.42" y="238.6" width="3.3" height="175.7" fill="#f0d935"/>
<rect x="678.71" y="238.6" width="3.3" height="175.7" fill="#f0d935"/>
<rect x="683.0" y="238.6" width="3.3" height="175.7" fill="#f0d935"/>
<rect x="687.29" y="238.6" width="3.3" height="175.7" fill="#f0d935"/>
<rect x="691.58" y="238.6" width="3.3" height="175.7" fill="#f0d935"/>
<rect x="695.87" y="238.6" width="3.3" height="175.7" fill="#f0d935"/>
<rect x="700.16" y="238.6" width="3.3" height="175.7" fill="#f0d935"/>
<rect x="704.45" y="238.6" width="3.3" height="175.7" fill="#f0d935"/>
<rect x="708.74" y="238.6" width="3.3" height="175.7" fill="#f0d935"/>
<rect x="713.03" y="238.6" width="3.3" height="175.7" fill="#f0d935"/>
<rect x="717.32" y="238.6" width="3.3" height="175.7" fill="#f0d935"/>
<rect x="721.61" y="238.6" width="3.3" height="175.7" fill="#f0d935"/>
<rect x="725.9" y="238.6" width="3.3" height="175.7" fill="#f0d935"/>
<rect x="730.19" y="238.6" width="3.3" height="175.7" fill="#f0d935"/>
<rect x="734.48" y="238.6" width="3.3" height="175.7" fill="#f0d935"/>
<rect x="738.77" y="238.6" width="3.3" height="175.7" fill="#f0d935"/>
<rect x="743.06" y="238.6" width="3.3" height="175.7" fill="#f0d935"/>
<rect x="747.35" y="238.6" width="3.3" height="175.7" fill="#f0d935"/>
<rect x="751.64" y="238.6" width="3.3" height="175.7" fill="#f0d935"/>
<rect x="755.93" y="242.2" width="3.3" height="172.1" fill="#f0d935"/>
<rect x="760.22" y="242.8" width="3.3" height="171.5" fill="#f0d935"/>
<rect x="764.51" y="243.6" width="3.3" height="170.7" fill="#f0d935"/>
<rect x="768.8" y="244" width="3.3" height="170.3" fill="#f0d935"/>
<rect x="773.09" y="244" width="3.3" height="170.3" fill="#f0d935"/>
<rect x="777.38" y="244.6" width="3.3" height="169.7" fill="#f0d935"/>
<rect x="781.67" y="245" width="3.3" height="169.3" fill="#f0d935"/>
<rect x="785.96" y="245.8" width="3.3" height="168.5" fill="#f0d935"/>
<rect x="790.25" y="246.2" width="3.3" height="168.1" fill="#f0d935"/>
<rect x="794.54" y="246.6" width="3.3" height="167.7" fill="#f0d935"/>
<rect x="798.83" y="246.8" width="3.3" height="167.5" fill="#f0d935"/>
<rect x="803.12" y="247" width="3.3" height="167.3" fill="#f0d935"/>
<rect x="807.41" y="247.6" width="3.3" height="166.7" fill="#f0d935"/>
<rect x="811.7" y="248.2" width="3.3" height="166.1" fill="#f0d935"/>
<rect x="815.99" y="248.8" width="3.3" height="165.5" fill="#f0d935"/>
<rect x="820.28" y="249.2" width="3.3" height="165.1" fill="#f0d935"/>
<rect x="824.57" y="249.8" width="3.3" height="164.5" fill="#f0d935"/>
<rect x="828.86" y="250.2" width="3.3" height="164.1" fill="#f0d935"/>
<rect x="833.15" y="250.6" width="3.3" height="163.7" fill="#f0d935"/>
<rect x="837.44" y="251.2" width="3.3" height="163.1" fill="#f0d935"/>
<rect x="841.73" y="251.8" width="3.3" height="162.5" fill="#f0d935"/>
<rect x="846.02" y="252.4" width="3.3" height="161.9" fill="#f0d935"/>
<rect x="850.31" y="253" width="3.3" height="161.3" fill="#f0d935"/>
<rect x="854.6" y="253.5" width="3.3" height="160.8" fill="#f0d935"/>
<rect x="858.89" y="254.1" width="3.3" height="160.2" fill="#f0d935"/>
<rect x="863.18" y="254.5" width="3.3" height="159.8" fill="#f0d935"/>
<rect x="867.47" y="255" width="3.3" height="159.3" fill="#f0d935"/>
<rect x="871.76" y="255.7" width="3.3" height="158.6" fill="#f0d935"/>
<rect x="876.05" y="256.2" width="3.3" height="158.1" fill="#f0d935"/>
<rect x="880.34" y="256.2" width="3.3" height="158.1" fill="#f0d935"/>
<rect x="884.63" y="256.7" width="3.3" height="157.6" fill="#f0d935"/>
<rect x="888.92" y="257.2" width="3.3" height="157.1" fill="#f0d935"/>
<rect x="893.21" y="257.7" width="3.3" height="156.6" fill="#f0d935"/>
<rect x="897.5" y="258.3" width="3.3" height="156.0" fill="#f0d935"/>
<rect x="901.79" y="259.3" width="3.3" height="155.0" fill="#f0d935"/>
<rect x="906.08" y="260" width="3.3" height="154.3" fill="#f0d935"/>
<rect x="910.37" y="260.3" width="3.3" height="154.0" fill="#f0d935"/>
<rect x="914.66" y="260.9" width="3.3" height="153.4" fill="#f0d935"/>
<rect x="918.95" y="261.9" width="3.3" height="152.4" fill="#f0d935"/>
<rect x="923.24" y="262.3" width="3.3" height="152.0" fill="#f0d935"/>
<rect x="927.53" y="262.9" width="3.3" height="151.4" fill="#f0d935"/>
<rect x="931.82" y="264.1" width="3.3" height="150.2" fill="#f0d935"/>
<rect x="936.11" y="264.5" width="3.3" height="149.8" fill="#f0d935"/>
<rect x="940.4" y="265.4" width="3.3" height="148.9" fill="#f0d935"/>
<rect x="944.69" y="266.1" width="3.3" height="148.2" fill="#f0d935"/>
<rect x="948.98" y="267.1" width="3.3" height="147.2" fill="#f0d935"/>
<rect x="953.27" y="268.1" width="3.3" height="146.2" fill="#f0d935"/>
<rect x="957.56" y="269.1" width="3.3" height="145.2" fill="#f0d935"/>
<rect x="961.85" y="270.1" width="3.3" height="144.2" fill="#f0d935"/>
<rect x="966.14" y="271.9" width="3.3" height="142.4" fill="#f0d935"/>
<rect x="970.43" y="274" width="3.3" height="140.3" fill="#f0d935"/>
<rect x="974.72" y="276.9" width="3.3" height="137.4" fill="#f0d935"/>
<rect x="979.01" y="284" width="3.3" height="130.3" fill="#f0d935"/>
<line x1="554" y1="379.5" x2="983" y2="379.5" stroke="rgba(185,195,212,0.25)" stroke-width="1"/>
<line x1="554" y1="344.5" x2="983" y2="344.5" stroke="rgba(185,195,212,0.25)" stroke-width="1"/>
<line x1="554" y1="308.5" x2="983" y2="308.5" stroke="rgba(185,195,212,0.25)" stroke-width="1"/>
<line x1="554" y1="273.5" x2="983" y2="273.5" stroke="rgba(185,195,212,0.25)" stroke-width="1"/>
<line x1="554" y1="238.5" x2="983" y2="238.5" stroke="#5e9a2c" stroke-width="1"/>
<line x1="553.7" y1="238.5" x2="553.7" y2="414.5" stroke="rgba(150,150,210,0.45)" stroke-width="0.7"/>
<line x1="554" y1="270.5" x2="980" y2="270.5" stroke="#9c98f2" stroke-width="1" stroke-dasharray="1,3.2"/>
<line x1="554" y1="282.5" x2="980" y2="282.5" stroke="#9c98f2" stroke-width="1" stroke-dasharray="1,3.2"/>
<text x="559.4" y="264.2" font-size="6.8" fill="#8a8a6a" textLength="13.4" lengthAdjust="spacingAndGlyphs">95 %</text>
<text x="559.4" y="276.2" font-size="6.8" fill="#8a8a6a" textLength="13.4" lengthAdjust="spacingAndGlyphs">99 %</text>
<text x="559.8" y="408" font-size="6.8" fill="#7a785c" textLength="44" lengthAdjust="spacingAndGlyphs">Deckungsmasse</text>
<line x1="554" y1="414.5" x2="983" y2="414.5" stroke="#4f3df0" stroke-width="1.2"/>
<line x1="594.5" y1="414.5" x2="594.5" y2="417.5" stroke="#a0a0a0" stroke-width="0.8"/>
<text x="594.4" y="426.8" font-size="6.8" fill="#757575" text-anchor="middle" textLength="13.2" lengthAdjust="spacingAndGlyphs">10 %</text>
<line x1="637.5" y1="414.5" x2="637.5" y2="417.5" stroke="#a0a0a0" stroke-width="0.8"/>
<text x="637.25" y="426.8" font-size="6.8" fill="#757575" text-anchor="middle" textLength="13.2" lengthAdjust="spacingAndGlyphs">20 %</text>
<line x1="680.5" y1="414.5" x2="680.5" y2="417.5" stroke="#a0a0a0" stroke-width="0.8"/>
<text x="680.1" y="426.8" font-size="6.8" fill="#757575" text-anchor="middle" textLength="13.2" lengthAdjust="spacingAndGlyphs">30 %</text>
<line x1="722.5" y1="414.5" x2="722.5" y2="417.5" stroke="#a0a0a0" stroke-width="0.8"/>
<text x="722.95" y="426.8" font-size="6.8" fill="#757575" text-anchor="middle" textLength="13.2" lengthAdjust="spacingAndGlyphs">40 %</text>
<line x1="765.5" y1="414.5" x2="765.5" y2="417.5" stroke="#a0a0a0" stroke-width="0.8"/>
<text x="765.8" y="426.8" font-size="6.8" fill="#757575" text-anchor="middle" textLength="13.2" lengthAdjust="spacingAndGlyphs">50 %</text>
<line x1="808.5" y1="414.5" x2="808.5" y2="417.5" stroke="#a0a0a0" stroke-width="0.8"/>
<text x="808.65" y="426.8" font-size="6.8" fill="#757575" text-anchor="middle" textLength="13.2" lengthAdjust="spacingAndGlyphs">60 %</text>
<line x1="851.5" y1="414.5" x2="851.5" y2="417.5" stroke="#a0a0a0" stroke-width="0.8"/>
<text x="851.5" y="426.8" font-size="6.8" fill="#757575" text-anchor="middle" textLength="13.2" lengthAdjust="spacingAndGlyphs">70 %</text>
<line x1="894.5" y1="414.5" x2="894.5" y2="417.5" stroke="#a0a0a0" stroke-width="0.8"/>
<text x="894.35" y="426.8" font-size="6.8" fill="#757575" text-anchor="middle" textLength="13.2" lengthAdjust="spacingAndGlyphs">80 %</text>
<line x1="937.5" y1="414.5" x2="937.5" y2="417.5" stroke="#a0a0a0" stroke-width="0.8"/>
<text x="937.2" y="426.8" font-size="6.8" fill="#757575" text-anchor="middle" textLength="13.2" lengthAdjust="spacingAndGlyphs">90 %</text>
<line x1="980.5" y1="414.5" x2="980.5" y2="417.5" stroke="#a0a0a0" stroke-width="0.8"/>
<text x="980.05" y="426.8" font-size="6.8" fill="#757575" text-anchor="middle" textLength="17" lengthAdjust="spacingAndGlyphs" clip-path="url(#cc)">100 %</text>
<text x="768.2" y="441" font-size="9.2" fill="#8d9cac" text-anchor="middle" textLength="68.5" lengthAdjust="spacingAndGlyphs">Wahrscheinlichkeit</text>
<text x="512.2" y="326" font-size="9.2" fill="#8d9cac" text-anchor="middle" textLength="57.3" lengthAdjust="spacingAndGlyphs" transform="rotate(-90 512.2 326)">Erwartungswert</text>
<rect x="6" y="481.5" width="978.5" height="14.5" fill="#f7f7f7"/>
<rect x="6.5" y="481.8" width="978" height="30" fill="none" stroke="#e6e8ea" stroke-width="1"/>
<line x1="6" y1="496.5" x2="985" y2="496.5" stroke="#e6e8ea" stroke-width="1"/>
<rect x="152.5" y="481.8" width="72" height="14.7" fill="#ffffff"/>
<line x1="152.5" y1="481.8" x2="152.5" y2="496.5" stroke="#e6e8ea" stroke-width="1"/>
<line x1="224.5" y1="481.8" x2="224.5" y2="496.5" stroke="#e6e8ea" stroke-width="1"/>
<rect x="7" y="497" width="977" height="10" fill="#ffffff"/>
<text x="30" y="491.5" font-size="6.6" fill="#42474c" textLength="26" lengthAdjust="spacingAndGlyphs" stroke="#42474c" stroke-width="0.05">Minimum</text>
<text x="87" y="491.5" font-size="6.6" fill="#42474c" textLength="58" lengthAdjust="spacingAndGlyphs" stroke="#42474c" stroke-width="0.05">Konfidenzintervall 99</text>
<text x="157" y="491.5" font-size="6.5" fill="#212529" font-weight="bold" textLength="63" lengthAdjust="spacingAndGlyphs">Konfidenzintervall 95</text>
<text x="234" y="491.5" font-size="6.6" fill="#42474c" textLength="55" lengthAdjust="spacingAndGlyphs" stroke="#42474c" stroke-width="0.05">Konfidenzintervall 5</text>
<text x="307" y="491.5" font-size="6.6" fill="#42474c" textLength="55" lengthAdjust="spacingAndGlyphs" stroke="#42474c" stroke-width="0.05">Konfidenzintervall 1</text>
<text x="394" y="491.5" font-size="6.6" fill="#42474c" textLength="27" lengthAdjust="spacingAndGlyphs" stroke="#42474c" stroke-width="0.05">Maximum</text>
</svg></body></html>
